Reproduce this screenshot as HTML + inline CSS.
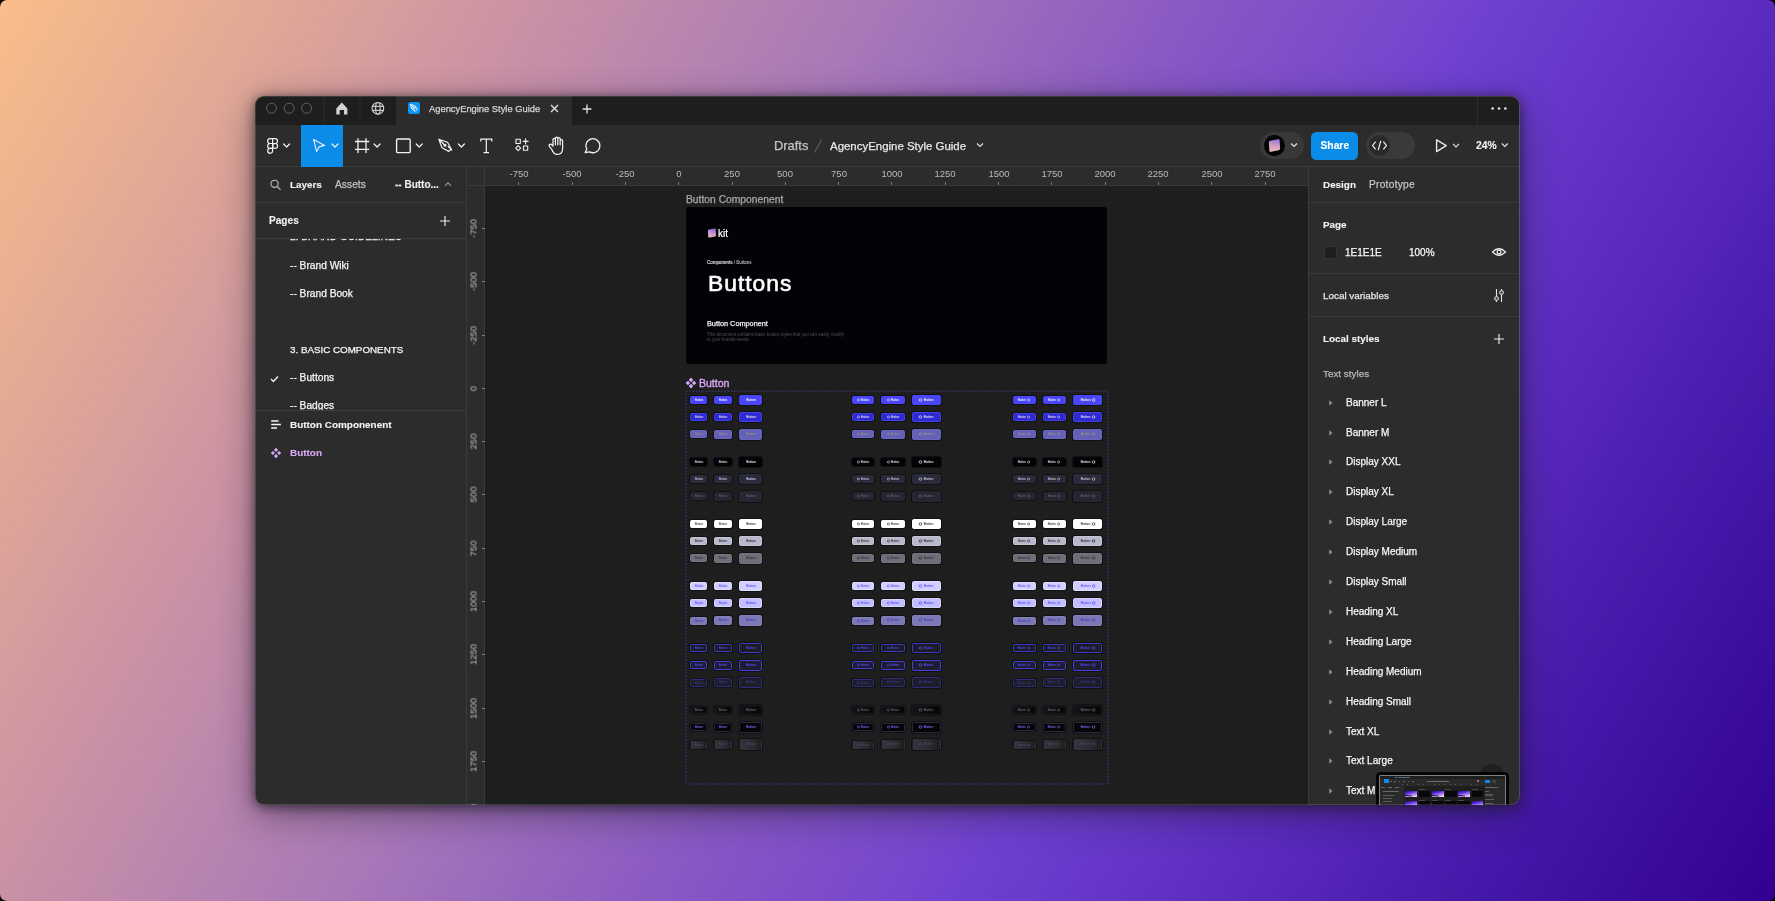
<!DOCTYPE html>
<html><head><meta charset="utf-8">
<style>
*{box-sizing:border-box;margin:0;padding:0}
html,body{width:1775px;height:901px;overflow:hidden;background:#000}
body{font-family:"Liberation Sans",sans-serif;position:relative}
.bg{position:absolute;left:0;top:0;width:1775px;height:901px;border-radius:7px;
background:linear-gradient(121deg,#F9BE8A 0%,#E0A896 12%,#C890A6 24%,#A878B8 38%,#8858C4 52%,#7646CE 62%,#6E40D0 65%,#5A2ABD 77%,#4216A6 88%,#320090 100%)}
.shadow{position:absolute;left:255px;top:96px;width:1265px;height:709px;border-radius:9px;box-shadow:0 2px 12px rgba(28,26,34,.7),0 10px 36px rgba(28,26,34,.45)}
.win{position:absolute;left:0;top:0;width:1775px;height:901px;clip-path:inset(96px 255.5px 96px 255px round 9px)}
.a{position:absolute}
.t{position:absolute;will-change:transform;white-space:nowrap;font-size:10px;line-height:12px;color:#E8E8E8}
.b{font-weight:bold}
.t{-webkit-text-stroke:0.25px currentColor}
.t.b{-webkit-text-stroke:0.1px currentColor}
</style></head><body>
<div class="bg"></div>
<div class="shadow"></div>
<div class="win">
  <!-- tab bar -->
  <div class="a" style="left:255px;top:96px;width:1265px;height:29px;background:#1E1E1E"></div>
  <!-- toolbar -->
  <div class="a" style="left:255px;top:125px;width:1265px;height:41px;background:#2C2C2C"></div>
  <div class="a" style="left:255px;top:166px;width:1265px;height:1px;background:#3A3A3A"></div>

  <!-- TABBAR CONTENT -->
  <svg class="a" style="left:255px;top:96px" width="400" height="29" viewBox="255 96 400 29">
    <g fill="none" stroke="#626262" stroke-width="1">
      <circle cx="271.5" cy="108.2" r="5"/><circle cx="289.2" cy="108.2" r="5"/><circle cx="306.6" cy="108.2" r="5"/>
    </g>
    <rect x="323.5" y="96" width="1" height="29" fill="#2A2A2A"/>
    <rect x="359.5" y="96" width="1" height="29" fill="#2A2A2A"/>
    <path d="M336.3 108.6 L341.85 102.4 L347.4 108.6 V114.6 H344 V110 H339.7 V114.6 H336.3 Z" fill="#D2D2D2"/>
    <g fill="none" stroke="#C8C8C8" stroke-width="1.2">
      <circle cx="377.9" cy="108.3" r="5.8"/>
      <ellipse cx="377.9" cy="108.3" rx="2.3" ry="5.8"/>
      <line x1="372.1" y1="106.3" x2="383.7" y2="106.3"/><line x1="372.1" y1="110.3" x2="383.7" y2="110.3"/>
    </g>
  </svg>
  <div class="a" style="left:396px;top:96px;width:176px;height:29px;background:#2C2C2C"></div>
  <div class="a" style="left:408px;top:102.2px;width:12px;height:12px;border-radius:2.5px;background:#0A94F4"></div>
  <svg class="a" style="left:408px;top:102.2px" width="12" height="12" viewBox="0 0 12 12"><g fill="none" stroke="#fff" stroke-width="1" stroke-linejoin="round"><path d="M2.4 2.4 L6.6 3.6 L9.4 7.2 L7.2 9.4 L3.6 6.6 Z"/><circle cx="6" cy="6" r="1.1"/><path d="M2.4 2.4 L5.2 5.2"/></g></svg>
  <div class="t" style="left:429px;top:102.5px;font-size:9.35px;color:#D6D6D6">AgencyEngine Style Guide</div>
  <svg class="a" style="left:550px;top:104px" width="9" height="9" viewBox="0 0 9 9"><path d="M1 1 L8 8 M8 1 L1 8" stroke="#E6E6E6" stroke-width="1.3"/></svg>
  <svg class="a" style="left:582px;top:104px" width="10" height="10" viewBox="0 0 10 10"><path d="M5 0.6 V9.4 M0.6 5 H9.4" stroke="#E6E6E6" stroke-width="1.3"/></svg>
  <div class="a" style="left:1477px;top:96px;width:1px;height:29px;background:#2E2E2E"></div>
  <svg class="a" style="left:1488px;top:104px" width="22" height="9" viewBox="0 0 22 9"><g fill="#E6E6E6"><circle cx="4.6" cy="4.5" r="1.3"/><circle cx="11" cy="4.5" r="1.3"/><circle cx="17.4" cy="4.5" r="1.3"/></g></svg>

  <!-- TOOLBAR CONTENT -->
  <div class="a" style="left:300.6px;top:125px;width:42.6px;height:42px;background:#0C8CE9"></div>
  <svg class="a" style="left:255px;top:125px" width="360" height="41" viewBox="255 125 360 41">
    <g fill="none" stroke="#F2F2F2" stroke-width="1.2" stroke-linejoin="round" stroke-linecap="round">
      <!-- figma logo -->
      <path d="M272.6 138.6 h-2.5 a2.45 2.45 0 0 0 0 4.9 h2.5 z M272.6 138.6 h2.5 a2.45 2.45 0 0 1 0 4.9 h-2.5 z M272.6 143.5 h-2.5 a2.45 2.45 0 0 0 0 4.9 h2.5 z"/>
      <circle cx="275.1" cy="145.95" r="2.45"/>
      <path d="M272.6 148.4 h-2.5 a2.45 2.45 0 1 0 2.5 2.45 z"/>
      <!-- chevrons -->
      <path d="M283.6 144 l3 3 l3 -3"/>
      <path d="M332 144 l3 3 l3 -3"/>
      <path d="M374.1 144 l3 3 l3 -3"/>
      <path d="M416.2 144 l3 3 l3 -3"/>
      <path d="M458.4 144 l3 3 l3 -3"/>
      <!-- cursor -->
      <path d="M313.6 139.4 L324.6 145.4 L319.3 146.6 L316.6 151.6 Z" stroke="#F4EEFF" stroke-width="1.1"/>
      <!-- frame -->
      <path d="M358 138.3 V153.1 M366 138.3 V153.1 M355 141.5 H369.3 M355 149.3 H369.3" stroke-linecap="butt" stroke-width="1.3"/>
      <!-- rect -->
      <rect x="396.6" y="139" width="13.6" height="13.6" rx="1.2" stroke-width="1.4"/>
      <!-- pen -->
      <path d="M438.8 139.2 L447.5 142.3 L451.2 149 L448.8 151.4 L442 147.8 Z M438.8 139.2 L444.6 145" stroke-width="1.2"/>
      <circle cx="445" cy="145.3" r="0.9" fill="#F2F2F2"/>
      <path d="M448.2 146.5 L451.8 150.1" />
      <!-- T -->
      <path d="M480.8 141.6 V139.2 H491.8 V141.6 M486.3 139.2 V152.7 M483.6 152.7 H489" stroke-width="1.2" stroke-linecap="butt" stroke-linejoin="miter"/>
      <!-- components -->
      <rect x="516" y="139.2" width="4.3" height="4.3" stroke-width="1.1"/>
      <path d="M525.6 138.8 V143.9 M523 141.35 H528.2" stroke-width="1.1"/>
      <path d="M518.15 145.6 L520.6 148.1 L518.15 150.6 L515.7 148.1 Z" stroke-width="1.1"/>
      <rect x="523.4" y="146" width="4.3" height="4.3" stroke-width="1.1"/>
      <!-- hand -->
      <path d="M551.8 149.4 L549.6 146.6 Q548.5 145.1 549.8 144.4 Q551 143.8 552 145 L553 146.2 V139.6 Q553 138.3 554.2 138.3 Q555.4 138.3 555.4 139.6 V144.8 V138.4 Q555.4 137.1 556.6 137.1 Q557.8 137.1 557.8 138.4 V144.8 V139 Q557.8 137.7 559 137.7 Q560.2 137.7 560.2 139 V144.8 V140.8 Q560.2 139.5 561.4 139.5 Q562.6 139.5 562.6 140.8 V148.8 Q562.6 154.4 557.2 154.4 Q553.8 154.4 551.8 149.4 Z" stroke-width="1.25"/>
      <!-- comment -->
      <path d="M585.2 152.6 L586.8 149.2 A7 7 0 1 1 589.6 151.9 Z" stroke-width="1.3"/>
    </g>
  </svg>
  <div class="t" style="left:773.5px;top:139px;font-size:12.9px;line-height:14px;color:#C4C4C4">Drafts</div>
  <svg class="a" style="left:813px;top:138px" width="10" height="16" viewBox="0 0 10 16"><path d="M8.6 1.5 L1.6 14.5" stroke="#6A6A6A" stroke-width="1"/></svg>
  <div class="t" style="left:830px;top:139px;font-size:11.45px;line-height:14px;color:#E8E8E8">AgencyEngine Style Guide</div>
  <svg class="a" style="left:975px;top:142px" width="10" height="7" viewBox="0 0 10 7"><path d="M2 1.5 l3 3 l3 -3" fill="none" stroke="#E0E0E0" stroke-width="1.2"/></svg>

  <div class="a" style="left:1260px;top:132px;width:44px;height:27px;border-radius:14px;background:#383838"></div>
  <div class="a" style="left:1263.8px;top:135px;width:21px;height:21px;border-radius:50%;background:#040406;overflow:hidden">
    <div class="a" style="left:5px;top:5px;width:11px;height:11px;transform:rotate(-12deg) skewX(-8deg);border-radius:1.5px;background:linear-gradient(200deg,#8B6FE0 0%,#C79ABF 45%,#F2C0B0 100%)"></div>
  </div>
  <svg class="a" style="left:1289px;top:142px" width="10" height="7" viewBox="0 0 10 7"><path d="M2 1.5 l3 3 l3 -3" fill="none" stroke="#E0E0E0" stroke-width="1.2"/></svg>
  <div class="a" style="left:1310.8px;top:131.5px;width:47.6px;height:28px;border-radius:5.5px;background:#0C8CE9"></div>
  <div class="t b" style="left:1310.8px;width:47.6px;text-align:center;top:139.5px;font-size:10.3px;color:#fff">Share</div>
  <div class="a" style="left:1365.6px;top:132px;width:49px;height:27px;border-radius:14px;background:#3A3A3A"></div>
  <div class="a" style="left:1368.9px;top:135px;width:21px;height:21px;border-radius:50%;background:#2A2A2A"></div>
  <svg class="a" style="left:1371px;top:139px" width="17" height="13" viewBox="0 0 17 13"><g fill="none" stroke="#F0F0F0" stroke-width="1.2"><path d="M4.6 2.6 L1.6 6.5 L4.6 10.4 M12.4 2.6 L15.4 6.5 L12.4 10.4 M9.8 1.8 L7.2 11.2"/></g></svg>
  <svg class="a" style="left:1430px;top:136px" width="35" height="20" viewBox="1430 136 35 20"><path d="M1436.6 139.8 V151.6 L1446.2 145.7 Z" fill="none" stroke="#E8E8E8" stroke-width="1.4" stroke-linejoin="round"/><path d="M1453 143.8 l3 3 l3 -3" fill="none" stroke="#E0E0E0" stroke-width="1.2"/></svg>
  <div class="t b" style="left:1476.4px;top:139.5px;font-size:10.3px;color:#F2F2F2">24%</div>
  <svg class="a" style="left:1500px;top:142px" width="10" height="7" viewBox="0 0 10 7"><path d="M1.8 1.5 l3 3 l3 -3" fill="none" stroke="#E0E0E0" stroke-width="1.2"/></svg>
  <!-- left panel -->
  <div class="a" style="left:255px;top:167px;width:211px;height:640px;background:#2C2C2C"></div>
  <div class="a" style="left:466px;top:167px;width:1px;height:640px;background:#3A3A3A"></div>

  <!-- LEFT PANEL CONTENT -->
  <div class="a" style="left:255px;top:202px;width:211px;height:1px;background:#3A3A3A"></div>
  <svg class="a" style="left:269px;top:178px" width="14" height="14" viewBox="0 0 14 14"><g fill="none" stroke="#BDBDBD" stroke-width="1.1"><circle cx="5.6" cy="5.8" r="3.6"/><path d="M8.3 8.5 L11.6 11.8"/></g></svg>
  <div class="t b" style="left:289.9px;top:179px;font-size:9.9px;color:#F2F2F2">Layers</div>
  <div class="t" style="left:334.8px;top:179px;font-size:10.2px;color:#C2C2C2;letter-spacing:0.05px">Assets</div>
  <div class="t b" style="left:394.6px;top:179px;font-size:10px;color:#F2F2F2">-- Butto...</div>
  <svg class="a" style="left:443px;top:181px" width="10" height="7" viewBox="0 0 10 7"><path d="M2 4.8 l3 -3 l3 3" fill="none" stroke="#9A9A9A" stroke-width="1.1"/></svg>
  <div class="t b" style="left:269px;top:215px;font-size:10.1px;color:#F2F2F2">Pages</div>
  <svg class="a" style="left:438.5px;top:214.5px" width="12" height="12" viewBox="0 0 12 12"><path d="M6 1 V11 M1 6 H11" stroke="#EAEAEA" stroke-width="1.2"/></svg>
  <div class="a" style="left:255px;top:238px;width:211px;height:1px;background:#3E3E3E"></div>
  <div class="a" style="left:255px;top:239px;width:211px;height:171px;overflow:hidden">
    <div class="t" style="left:35px;top:-8px;color:#F6F6F6;font-size:10.2px">2. BRAND GUIDELINES</div>
    <div class="t" style="left:35px;top:20.5px;color:#F6F6F6;font-size:10.2px">-- Brand Wiki</div>
    <div class="t" style="left:35px;top:48.5px;color:#F6F6F6;font-size:10.2px">-- Brand Book</div>
    <div class="t" style="left:35px;top:104.5px;color:#F6F6F6;font-size:9.8px">3. BASIC COMPONENTS</div>
    <svg class="a" style="left:15px;top:135.5px" width="9" height="8" viewBox="0 0 9 8"><path d="M1 4 L3.4 6.4 L8 1.6" fill="none" stroke="#F2F2F2" stroke-width="1.4"/></svg>
    <div class="t" style="left:35px;top:132.5px;color:#F6F6F6;font-size:10.2px">-- Buttons</div>
    <div class="t" style="left:35px;top:160.5px;color:#F6F6F6;font-size:10.2px">-- Badges</div>
  </div>
  <div class="a" style="left:255px;top:410px;width:211px;height:1px;background:#3E3E3E"></div>
  <svg class="a" style="left:270px;top:418px" width="12" height="12" viewBox="0 0 12 12"><path d="M1.2 2.9 H8.5 M1.2 6.6 H10.9 M1.2 10.1 H7" stroke="#F6F6F6" stroke-width="1.5"/></svg>
  <div class="t b" style="left:290.3px;top:418.5px;color:#F4F4F4;font-size:9.95px">Button Componenent</div>
  <svg class="a" style="left:270px;top:446.5px" width="12" height="12" viewBox="0 0 12 12"><g fill="#D8A8F8"><path d="M6 0.8 L8.1 2.9 L6 5 L3.9 2.9Z M6 7 L8.1 9.1 L6 11.2 L3.9 9.1Z M2.9 3.9 L5 6 L2.9 8.1 L0.8 6Z M9.1 3.9 L11.2 6 L9.1 8.1 L7 6Z"/></g></svg>
  <div class="t b" style="left:290.3px;top:446.5px;color:#D9A9F7;font-size:9.95px">Button</div>
  <!-- rulers -->
  <div class="a" style="left:467px;top:167px;width:841px;height:18px;background:#2C2C2C"></div>
  <div class="a" style="left:467px;top:167px;width:18px;height:640px;background:#2C2C2C"></div>
  <div class="a" style="left:467px;top:185px;width:841px;height:1px;background:#3A3A3A"></div>
  <div class="a" style="left:484px;top:167px;width:1px;height:640px;background:#3A3A3A"></div>
  <div class="t" style="left:498.8px;width:40px;text-align:center;top:167.8px;font-size:9.5px;line-height:11px;color:#BABABA;-webkit-text-stroke:0">-750</div>
  <div class="a" style="left:518.3px;top:181.5px;width:1px;height:3px;background:#7A7A7A"></div>
  <div class="t" style="left:552.1px;width:40px;text-align:center;top:167.8px;font-size:9.5px;line-height:11px;color:#BABABA;-webkit-text-stroke:0">-500</div>
  <div class="a" style="left:571.6px;top:181.5px;width:1px;height:3px;background:#7A7A7A"></div>
  <div class="t" style="left:605.4px;width:40px;text-align:center;top:167.8px;font-size:9.5px;line-height:11px;color:#BABABA;-webkit-text-stroke:0">-250</div>
  <div class="a" style="left:624.9px;top:181.5px;width:1px;height:3px;background:#7A7A7A"></div>
  <div class="t" style="left:658.7px;width:40px;text-align:center;top:167.8px;font-size:9.5px;line-height:11px;color:#BABABA;-webkit-text-stroke:0">0</div>
  <div class="a" style="left:678.2px;top:181.5px;width:1px;height:3px;background:#7A7A7A"></div>
  <div class="t" style="left:712.0px;width:40px;text-align:center;top:167.8px;font-size:9.5px;line-height:11px;color:#BABABA;-webkit-text-stroke:0">250</div>
  <div class="a" style="left:731.5px;top:181.5px;width:1px;height:3px;background:#7A7A7A"></div>
  <div class="t" style="left:765.3px;width:40px;text-align:center;top:167.8px;font-size:9.5px;line-height:11px;color:#BABABA;-webkit-text-stroke:0">500</div>
  <div class="a" style="left:784.8px;top:181.5px;width:1px;height:3px;background:#7A7A7A"></div>
  <div class="t" style="left:818.6px;width:40px;text-align:center;top:167.8px;font-size:9.5px;line-height:11px;color:#BABABA;-webkit-text-stroke:0">750</div>
  <div class="a" style="left:838.1px;top:181.5px;width:1px;height:3px;background:#7A7A7A"></div>
  <div class="t" style="left:871.9px;width:40px;text-align:center;top:167.8px;font-size:9.5px;line-height:11px;color:#BABABA;-webkit-text-stroke:0">1000</div>
  <div class="a" style="left:891.4px;top:181.5px;width:1px;height:3px;background:#7A7A7A"></div>
  <div class="t" style="left:925.2px;width:40px;text-align:center;top:167.8px;font-size:9.5px;line-height:11px;color:#BABABA;-webkit-text-stroke:0">1250</div>
  <div class="a" style="left:944.7px;top:181.5px;width:1px;height:3px;background:#7A7A7A"></div>
  <div class="t" style="left:978.5px;width:40px;text-align:center;top:167.8px;font-size:9.5px;line-height:11px;color:#BABABA;-webkit-text-stroke:0">1500</div>
  <div class="a" style="left:998.0px;top:181.5px;width:1px;height:3px;background:#7A7A7A"></div>
  <div class="t" style="left:1031.8px;width:40px;text-align:center;top:167.8px;font-size:9.5px;line-height:11px;color:#BABABA;-webkit-text-stroke:0">1750</div>
  <div class="a" style="left:1051.3px;top:181.5px;width:1px;height:3px;background:#7A7A7A"></div>
  <div class="t" style="left:1085.1px;width:40px;text-align:center;top:167.8px;font-size:9.5px;line-height:11px;color:#BABABA;-webkit-text-stroke:0">2000</div>
  <div class="a" style="left:1104.6px;top:181.5px;width:1px;height:3px;background:#7A7A7A"></div>
  <div class="t" style="left:1138.4px;width:40px;text-align:center;top:167.8px;font-size:9.5px;line-height:11px;color:#BABABA;-webkit-text-stroke:0">2250</div>
  <div class="a" style="left:1157.9px;top:181.5px;width:1px;height:3px;background:#7A7A7A"></div>
  <div class="t" style="left:1191.7px;width:40px;text-align:center;top:167.8px;font-size:9.5px;line-height:11px;color:#BABABA;-webkit-text-stroke:0">2500</div>
  <div class="a" style="left:1211.2px;top:181.5px;width:1px;height:3px;background:#7A7A7A"></div>
  <div class="t" style="left:1245.0px;width:40px;text-align:center;top:167.8px;font-size:9.5px;line-height:11px;color:#BABABA;-webkit-text-stroke:0">2750</div>
  <div class="a" style="left:1264.5px;top:181.5px;width:1px;height:3px;background:#7A7A7A"></div>
  <div class="t" style="left:452.6px;width:40px;text-align:center;top:222.9px;font-size:9.5px;line-height:11px;color:#BABABA;-webkit-text-stroke:0;transform:rotate(-90deg)">-750</div>
  <div class="a" style="left:481.5px;top:227.9px;width:3px;height:1px;background:#7A7A7A"></div>
  <div class="t" style="left:452.6px;width:40px;text-align:center;top:276.2px;font-size:9.5px;line-height:11px;color:#BABABA;-webkit-text-stroke:0;transform:rotate(-90deg)">-500</div>
  <div class="a" style="left:481.5px;top:281.2px;width:3px;height:1px;background:#7A7A7A"></div>
  <div class="t" style="left:452.6px;width:40px;text-align:center;top:329.5px;font-size:9.5px;line-height:11px;color:#BABABA;-webkit-text-stroke:0;transform:rotate(-90deg)">-250</div>
  <div class="a" style="left:481.5px;top:334.5px;width:3px;height:1px;background:#7A7A7A"></div>
  <div class="t" style="left:452.6px;width:40px;text-align:center;top:382.8px;font-size:9.5px;line-height:11px;color:#BABABA;-webkit-text-stroke:0;transform:rotate(-90deg)">0</div>
  <div class="a" style="left:481.5px;top:387.8px;width:3px;height:1px;background:#7A7A7A"></div>
  <div class="t" style="left:452.6px;width:40px;text-align:center;top:436.1px;font-size:9.5px;line-height:11px;color:#BABABA;-webkit-text-stroke:0;transform:rotate(-90deg)">250</div>
  <div class="a" style="left:481.5px;top:441.1px;width:3px;height:1px;background:#7A7A7A"></div>
  <div class="t" style="left:452.6px;width:40px;text-align:center;top:489.4px;font-size:9.5px;line-height:11px;color:#BABABA;-webkit-text-stroke:0;transform:rotate(-90deg)">500</div>
  <div class="a" style="left:481.5px;top:494.4px;width:3px;height:1px;background:#7A7A7A"></div>
  <div class="t" style="left:452.6px;width:40px;text-align:center;top:542.7px;font-size:9.5px;line-height:11px;color:#BABABA;-webkit-text-stroke:0;transform:rotate(-90deg)">750</div>
  <div class="a" style="left:481.5px;top:547.7px;width:3px;height:1px;background:#7A7A7A"></div>
  <div class="t" style="left:452.6px;width:40px;text-align:center;top:596.0px;font-size:9.5px;line-height:11px;color:#BABABA;-webkit-text-stroke:0;transform:rotate(-90deg)">1000</div>
  <div class="a" style="left:481.5px;top:601.0px;width:3px;height:1px;background:#7A7A7A"></div>
  <div class="t" style="left:452.6px;width:40px;text-align:center;top:649.3px;font-size:9.5px;line-height:11px;color:#BABABA;-webkit-text-stroke:0;transform:rotate(-90deg)">1250</div>
  <div class="a" style="left:481.5px;top:654.3px;width:3px;height:1px;background:#7A7A7A"></div>
  <div class="t" style="left:452.6px;width:40px;text-align:center;top:702.6px;font-size:9.5px;line-height:11px;color:#BABABA;-webkit-text-stroke:0;transform:rotate(-90deg)">1500</div>
  <div class="a" style="left:481.5px;top:707.6px;width:3px;height:1px;background:#7A7A7A"></div>
  <div class="t" style="left:452.6px;width:40px;text-align:center;top:755.9px;font-size:9.5px;line-height:11px;color:#BABABA;-webkit-text-stroke:0;transform:rotate(-90deg)">1750</div>
  <div class="a" style="left:481.5px;top:760.9px;width:3px;height:1px;background:#7A7A7A"></div>
  <div class="t" style="left:452.6px;width:40px;text-align:center;top:809.2px;font-size:9.5px;line-height:11px;color:#BABABA;-webkit-text-stroke:0;transform:rotate(-90deg)">2000</div>
  <div class="a" style="left:481.5px;top:814.2px;width:3px;height:1px;background:#7A7A7A"></div>
  <!-- canvas -->
  <div class="a" style="left:485px;top:186px;width:823px;height:620px;background:#1E1E1E"></div>
  <!-- CANVAS CONTENT -->
  <div class="t" style="left:685.8px;top:193.5px;font-size:10.3px;color:#A8A8A8">Button Componenent</div>
  <div class="a" style="left:686.2px;top:206.8px;width:421px;height:157px;border-radius:3px;background:#030307"></div>
  <div class="a" style="left:707.8px;top:229.2px;width:8px;height:8px;transform:rotate(-10deg) skewX(-6deg);border-radius:1px;background:linear-gradient(210deg,#7A5CE8 0%,#C690C8 50%,#F4C8B8 100%)"></div>
  <div class="t" style="left:717.8px;top:227.5px;font-size:10px;color:#FFFFFF;-webkit-text-stroke:0.2px #fff">kit</div>
  <div class="t" style="left:707px;top:259.8px;font-size:4.5px;line-height:5px;color:#E6E6E6;-webkit-text-stroke:0.1px #e6e6e6">Components <span style="color:#8A8A8A">/ Buttons</span></div>
  <div class="t" style="left:707.8px;top:270.2px;font-size:22.8px;line-height:26px;letter-spacing:1.0px;color:#FFFFFF;-webkit-text-stroke:0.6px #fff">Buttons</div>
  <div class="t" style="left:707px;top:320.4px;font-size:7.3px;line-height:8px;color:#F0F0F0;-webkit-text-stroke:0.25px #f0f0f0">Button Component</div>
  <div class="t" style="left:707px;top:332.8px;font-size:4.45px;line-height:4.6px;color:#4E4E5A;-webkit-text-stroke:0">This document contains basic button styles that you can easily modify<br>to your brands needs</div>
  <svg class="a" style="left:685px;top:377px" width="12" height="12" viewBox="0 0 12 12"><g fill="#D7A6F5"><path d="M6 0.6 L8.3 2.9 L6 5.2 L3.7 2.9Z M6 6.8 L8.3 9.1 L6 11.4 L3.7 9.1Z M2.9 3.7 L5.2 6 L2.9 8.3 L0.6 6Z M9.1 3.7 L11.4 6 L9.1 8.3 L6.8 6Z"/></g></svg>
  <div class="t" style="left:698.6px;top:376.5px;font-size:10.5px;color:#D9A8F7;-webkit-text-stroke:0.35px #D9A8F7">Button</div>
  <svg class="a" style="left:685px;top:389.5px" width="424" height="396" viewBox="0 0 424 396"><rect x="1.1" y="1.2" width="421.8" height="392.8" fill="none" stroke="#4E3A94" stroke-width="1" stroke-dasharray="1.4 1.8"/></svg>
  <div class="a" style="left:690.0px;top:395.8px;width:17.0px;height:8.0px;border-radius:1.5px;background:#4B45FA;border:0.7px solid #4B45FA;box-shadow:0 0 0 0.8px rgba(0,0,0,.55)"><div style="position:absolute;left:50%;top:50%;transform:translate(-50%,-50%) scale(0.27);display:flex;align-items:center;font-size:10px;line-height:12px;color:#FFFFFF;white-space:nowrap;-webkit-text-stroke:0.15px currentColor">Button</div></div>
  <div class="a" style="left:713.7px;top:395.5px;width:18.6px;height:8.6px;border-radius:1.5px;background:#4B45FA;border:0.7px solid #4B45FA;box-shadow:0 0 0 0.8px rgba(0,0,0,.55)"><div style="position:absolute;left:50%;top:50%;transform:translate(-50%,-50%) scale(0.27);display:flex;align-items:center;font-size:10px;line-height:12px;color:#FFFFFF;white-space:nowrap;-webkit-text-stroke:0.15px currentColor">Button</div></div>
  <div class="a" style="left:739.0px;top:394.5px;width:23.1px;height:10.6px;border-radius:1.8px;background:#4B45FA;border:0.7px solid #4B45FA;box-shadow:0 0 0 0.8px rgba(0,0,0,.55)"><div style="position:absolute;left:50%;top:50%;transform:translate(-50%,-50%) scale(0.33);display:flex;align-items:center;font-size:10px;line-height:12px;color:#FFFFFF;white-space:nowrap;-webkit-text-stroke:0.15px currentColor">Button</div></div>
  <div class="a" style="left:851.5px;top:395.8px;width:22.5px;height:8.0px;border-radius:1.5px;background:#4B45FA;border:0.7px solid #4B45FA;box-shadow:0 0 0 0.8px rgba(0,0,0,.55)"><div style="position:absolute;left:50%;top:50%;transform:translate(-50%,-50%) scale(0.27);display:flex;align-items:center;font-size:10px;line-height:12px;color:#FFFFFF;white-space:nowrap;-webkit-text-stroke:0.15px currentColor"><i style="display:inline-block;width:10px;height:10px;border:2px solid #FFFFFF;border-radius:50%;margin:0 5px 0 0"></i>Button</div></div>
  <div class="a" style="left:881.2px;top:395.5px;width:24.1px;height:8.6px;border-radius:1.5px;background:#4B45FA;border:0.7px solid #4B45FA;box-shadow:0 0 0 0.8px rgba(0,0,0,.55)"><div style="position:absolute;left:50%;top:50%;transform:translate(-50%,-50%) scale(0.27);display:flex;align-items:center;font-size:10px;line-height:12px;color:#FFFFFF;white-space:nowrap;-webkit-text-stroke:0.15px currentColor"><i style="display:inline-block;width:10px;height:10px;border:2px solid #FFFFFF;border-radius:50%;margin:0 5px 0 0"></i>Button</div></div>
  <div class="a" style="left:911.7px;top:394.5px;width:29.3px;height:10.6px;border-radius:1.8px;background:#4B45FA;border:0.7px solid #4B45FA;box-shadow:0 0 0 0.8px rgba(0,0,0,.55)"><div style="position:absolute;left:50%;top:50%;transform:translate(-50%,-50%) scale(0.33);display:flex;align-items:center;font-size:10px;line-height:12px;color:#FFFFFF;white-space:nowrap;-webkit-text-stroke:0.15px currentColor"><i style="display:inline-block;width:10px;height:10px;border:2px solid #FFFFFF;border-radius:50%;margin:0 5px 0 0"></i>Button</div></div>
  <div class="a" style="left:1013.1px;top:395.8px;width:22.5px;height:8.0px;border-radius:1.5px;background:#4B45FA;border:0.7px solid #4B45FA;box-shadow:0 0 0 0.8px rgba(0,0,0,.55)"><div style="position:absolute;left:50%;top:50%;transform:translate(-50%,-50%) scale(0.27);display:flex;align-items:center;font-size:10px;line-height:12px;color:#FFFFFF;white-space:nowrap;-webkit-text-stroke:0.15px currentColor">Button<i style="display:inline-block;width:10px;height:10px;border:2px solid #FFFFFF;border-radius:50%;margin:0 0 0 5px"></i></div></div>
  <div class="a" style="left:1042.7px;top:395.5px;width:23.5px;height:8.6px;border-radius:1.5px;background:#4B45FA;border:0.7px solid #4B45FA;box-shadow:0 0 0 0.8px rgba(0,0,0,.55)"><div style="position:absolute;left:50%;top:50%;transform:translate(-50%,-50%) scale(0.27);display:flex;align-items:center;font-size:10px;line-height:12px;color:#FFFFFF;white-space:nowrap;-webkit-text-stroke:0.15px currentColor">Button<i style="display:inline-block;width:10px;height:10px;border:2px solid #FFFFFF;border-radius:50%;margin:0 0 0 5px"></i></div></div>
  <div class="a" style="left:1073.3px;top:394.5px;width:29.0px;height:10.6px;border-radius:1.8px;background:#4B45FA;border:0.7px solid #4B45FA;box-shadow:0 0 0 0.8px rgba(0,0,0,.55)"><div style="position:absolute;left:50%;top:50%;transform:translate(-50%,-50%) scale(0.33);display:flex;align-items:center;font-size:10px;line-height:12px;color:#FFFFFF;white-space:nowrap;-webkit-text-stroke:0.15px currentColor">Button<i style="display:inline-block;width:10px;height:10px;border:2px solid #FFFFFF;border-radius:50%;margin:0 0 0 5px"></i></div></div>
  <div class="a" style="left:690.0px;top:413.1px;width:17.0px;height:8.0px;border-radius:1.5px;background:#2E2ACF;border:0.7px solid #4541E8;box-shadow:0 0 0 0.8px rgba(0,0,0,.55)"><div style="position:absolute;left:50%;top:50%;transform:translate(-50%,-50%) scale(0.27);display:flex;align-items:center;font-size:10px;line-height:12px;color:#E8E6FF;white-space:nowrap;-webkit-text-stroke:0.15px currentColor">Button</div></div>
  <div class="a" style="left:713.7px;top:412.8px;width:18.6px;height:8.6px;border-radius:1.5px;background:#2E2ACF;border:0.7px solid #4541E8;box-shadow:0 0 0 0.8px rgba(0,0,0,.55)"><div style="position:absolute;left:50%;top:50%;transform:translate(-50%,-50%) scale(0.27);display:flex;align-items:center;font-size:10px;line-height:12px;color:#E8E6FF;white-space:nowrap;-webkit-text-stroke:0.15px currentColor">Button</div></div>
  <div class="a" style="left:739.0px;top:411.8px;width:23.1px;height:10.6px;border-radius:1.8px;background:#2E2ACF;border:0.7px solid #4541E8;box-shadow:0 0 0 0.8px rgba(0,0,0,.55)"><div style="position:absolute;left:50%;top:50%;transform:translate(-50%,-50%) scale(0.33);display:flex;align-items:center;font-size:10px;line-height:12px;color:#E8E6FF;white-space:nowrap;-webkit-text-stroke:0.15px currentColor">Button</div></div>
  <div class="a" style="left:851.5px;top:413.1px;width:22.5px;height:8.0px;border-radius:1.5px;background:#2E2ACF;border:0.7px solid #4541E8;box-shadow:0 0 0 0.8px rgba(0,0,0,.55)"><div style="position:absolute;left:50%;top:50%;transform:translate(-50%,-50%) scale(0.27);display:flex;align-items:center;font-size:10px;line-height:12px;color:#E8E6FF;white-space:nowrap;-webkit-text-stroke:0.15px currentColor"><i style="display:inline-block;width:10px;height:10px;border:2px solid #E8E6FF;border-radius:50%;margin:0 5px 0 0"></i>Button</div></div>
  <div class="a" style="left:881.2px;top:412.8px;width:24.1px;height:8.6px;border-radius:1.5px;background:#2E2ACF;border:0.7px solid #4541E8;box-shadow:0 0 0 0.8px rgba(0,0,0,.55)"><div style="position:absolute;left:50%;top:50%;transform:translate(-50%,-50%) scale(0.27);display:flex;align-items:center;font-size:10px;line-height:12px;color:#E8E6FF;white-space:nowrap;-webkit-text-stroke:0.15px currentColor"><i style="display:inline-block;width:10px;height:10px;border:2px solid #E8E6FF;border-radius:50%;margin:0 5px 0 0"></i>Button</div></div>
  <div class="a" style="left:911.7px;top:411.8px;width:29.3px;height:10.6px;border-radius:1.8px;background:#2E2ACF;border:0.7px solid #4541E8;box-shadow:0 0 0 0.8px rgba(0,0,0,.55)"><div style="position:absolute;left:50%;top:50%;transform:translate(-50%,-50%) scale(0.33);display:flex;align-items:center;font-size:10px;line-height:12px;color:#E8E6FF;white-space:nowrap;-webkit-text-stroke:0.15px currentColor"><i style="display:inline-block;width:10px;height:10px;border:2px solid #E8E6FF;border-radius:50%;margin:0 5px 0 0"></i>Button</div></div>
  <div class="a" style="left:1013.1px;top:413.1px;width:22.5px;height:8.0px;border-radius:1.5px;background:#2E2ACF;border:0.7px solid #4541E8;box-shadow:0 0 0 0.8px rgba(0,0,0,.55)"><div style="position:absolute;left:50%;top:50%;transform:translate(-50%,-50%) scale(0.27);display:flex;align-items:center;font-size:10px;line-height:12px;color:#E8E6FF;white-space:nowrap;-webkit-text-stroke:0.15px currentColor">Button<i style="display:inline-block;width:10px;height:10px;border:2px solid #E8E6FF;border-radius:50%;margin:0 0 0 5px"></i></div></div>
  <div class="a" style="left:1042.7px;top:412.8px;width:23.5px;height:8.6px;border-radius:1.5px;background:#2E2ACF;border:0.7px solid #4541E8;box-shadow:0 0 0 0.8px rgba(0,0,0,.55)"><div style="position:absolute;left:50%;top:50%;transform:translate(-50%,-50%) scale(0.27);display:flex;align-items:center;font-size:10px;line-height:12px;color:#E8E6FF;white-space:nowrap;-webkit-text-stroke:0.15px currentColor">Button<i style="display:inline-block;width:10px;height:10px;border:2px solid #E8E6FF;border-radius:50%;margin:0 0 0 5px"></i></div></div>
  <div class="a" style="left:1073.3px;top:411.8px;width:29.0px;height:10.6px;border-radius:1.8px;background:#2E2ACF;border:0.7px solid #4541E8;box-shadow:0 0 0 0.8px rgba(0,0,0,.55)"><div style="position:absolute;left:50%;top:50%;transform:translate(-50%,-50%) scale(0.33);display:flex;align-items:center;font-size:10px;line-height:12px;color:#E8E6FF;white-space:nowrap;-webkit-text-stroke:0.15px currentColor">Button<i style="display:inline-block;width:10px;height:10px;border:2px solid #E8E6FF;border-radius:50%;margin:0 0 0 5px"></i></div></div>
  <div class="a" style="left:690.0px;top:430.3px;width:17.0px;height:8.0px;border-radius:1.5px;background:#6461B8;border:0.7px solid #6A66C0;box-shadow:0 0 0 0.8px rgba(0,0,0,.55)"><div style="position:absolute;left:50%;top:50%;transform:translate(-50%,-50%) scale(0.27);display:flex;align-items:center;font-size:10px;line-height:12px;color:#A09878;white-space:nowrap;-webkit-text-stroke:0.15px currentColor">Button</div></div>
  <div class="a" style="left:713.7px;top:430.0px;width:18.6px;height:8.6px;border-radius:1.5px;background:#6461B8;border:0.7px solid #6A66C0;box-shadow:0 0 0 0.8px rgba(0,0,0,.55)"><div style="position:absolute;left:50%;top:50%;transform:translate(-50%,-50%) scale(0.27);display:flex;align-items:center;font-size:10px;line-height:12px;color:#A09878;white-space:nowrap;-webkit-text-stroke:0.15px currentColor">Button</div></div>
  <div class="a" style="left:739.0px;top:429.0px;width:23.1px;height:10.6px;border-radius:1.8px;background:#6461B8;border:0.7px solid #6A66C0;box-shadow:0 0 0 0.8px rgba(0,0,0,.55)"><div style="position:absolute;left:50%;top:50%;transform:translate(-50%,-50%) scale(0.33);display:flex;align-items:center;font-size:10px;line-height:12px;color:#A09878;white-space:nowrap;-webkit-text-stroke:0.15px currentColor">Button</div></div>
  <div class="a" style="left:851.5px;top:430.3px;width:22.5px;height:8.0px;border-radius:1.5px;background:#6461B8;border:0.7px solid #6A66C0;box-shadow:0 0 0 0.8px rgba(0,0,0,.55)"><div style="position:absolute;left:50%;top:50%;transform:translate(-50%,-50%) scale(0.27);display:flex;align-items:center;font-size:10px;line-height:12px;color:#A09878;white-space:nowrap;-webkit-text-stroke:0.15px currentColor"><i style="display:inline-block;width:10px;height:10px;border:2px solid #A09878;border-radius:50%;margin:0 5px 0 0"></i>Button</div></div>
  <div class="a" style="left:881.2px;top:430.0px;width:24.1px;height:8.6px;border-radius:1.5px;background:#6461B8;border:0.7px solid #6A66C0;box-shadow:0 0 0 0.8px rgba(0,0,0,.55)"><div style="position:absolute;left:50%;top:50%;transform:translate(-50%,-50%) scale(0.27);display:flex;align-items:center;font-size:10px;line-height:12px;color:#A09878;white-space:nowrap;-webkit-text-stroke:0.15px currentColor"><i style="display:inline-block;width:10px;height:10px;border:2px solid #A09878;border-radius:50%;margin:0 5px 0 0"></i>Button</div></div>
  <div class="a" style="left:911.7px;top:429.0px;width:29.3px;height:10.6px;border-radius:1.8px;background:#6461B8;border:0.7px solid #6A66C0;box-shadow:0 0 0 0.8px rgba(0,0,0,.55)"><div style="position:absolute;left:50%;top:50%;transform:translate(-50%,-50%) scale(0.33);display:flex;align-items:center;font-size:10px;line-height:12px;color:#A09878;white-space:nowrap;-webkit-text-stroke:0.15px currentColor"><i style="display:inline-block;width:10px;height:10px;border:2px solid #A09878;border-radius:50%;margin:0 5px 0 0"></i>Button</div></div>
  <div class="a" style="left:1013.1px;top:430.3px;width:22.5px;height:8.0px;border-radius:1.5px;background:#6461B8;border:0.7px solid #6A66C0;box-shadow:0 0 0 0.8px rgba(0,0,0,.55)"><div style="position:absolute;left:50%;top:50%;transform:translate(-50%,-50%) scale(0.27);display:flex;align-items:center;font-size:10px;line-height:12px;color:#A09878;white-space:nowrap;-webkit-text-stroke:0.15px currentColor">Button<i style="display:inline-block;width:10px;height:10px;border:2px solid #A09878;border-radius:50%;margin:0 0 0 5px"></i></div></div>
  <div class="a" style="left:1042.7px;top:430.0px;width:23.5px;height:8.6px;border-radius:1.5px;background:#6461B8;border:0.7px solid #6A66C0;box-shadow:0 0 0 0.8px rgba(0,0,0,.55)"><div style="position:absolute;left:50%;top:50%;transform:translate(-50%,-50%) scale(0.27);display:flex;align-items:center;font-size:10px;line-height:12px;color:#A09878;white-space:nowrap;-webkit-text-stroke:0.15px currentColor">Button<i style="display:inline-block;width:10px;height:10px;border:2px solid #A09878;border-radius:50%;margin:0 0 0 5px"></i></div></div>
  <div class="a" style="left:1073.3px;top:429.0px;width:29.0px;height:10.6px;border-radius:1.8px;background:#6461B8;border:0.7px solid #6A66C0;box-shadow:0 0 0 0.8px rgba(0,0,0,.55)"><div style="position:absolute;left:50%;top:50%;transform:translate(-50%,-50%) scale(0.33);display:flex;align-items:center;font-size:10px;line-height:12px;color:#A09878;white-space:nowrap;-webkit-text-stroke:0.15px currentColor">Button<i style="display:inline-block;width:10px;height:10px;border:2px solid #A09878;border-radius:50%;margin:0 0 0 5px"></i></div></div>
  <div class="a" style="left:690.0px;top:457.9px;width:17.0px;height:8.0px;border-radius:1.5px;background:#040408;border:0.7px solid #040408;box-shadow:0 0 0 0.8px rgba(0,0,0,.55)"><div style="position:absolute;left:50%;top:50%;transform:translate(-50%,-50%) scale(0.27);display:flex;align-items:center;font-size:10px;line-height:12px;color:#F0F0F0;white-space:nowrap;-webkit-text-stroke:0.15px currentColor">Button</div></div>
  <div class="a" style="left:713.7px;top:457.6px;width:18.6px;height:8.6px;border-radius:1.5px;background:#040408;border:0.7px solid #040408;box-shadow:0 0 0 0.8px rgba(0,0,0,.55)"><div style="position:absolute;left:50%;top:50%;transform:translate(-50%,-50%) scale(0.27);display:flex;align-items:center;font-size:10px;line-height:12px;color:#F0F0F0;white-space:nowrap;-webkit-text-stroke:0.15px currentColor">Button</div></div>
  <div class="a" style="left:739.0px;top:456.6px;width:23.1px;height:10.6px;border-radius:1.8px;background:#040408;border:0.7px solid #040408;box-shadow:0 0 0 0.8px rgba(0,0,0,.55)"><div style="position:absolute;left:50%;top:50%;transform:translate(-50%,-50%) scale(0.33);display:flex;align-items:center;font-size:10px;line-height:12px;color:#F0F0F0;white-space:nowrap;-webkit-text-stroke:0.15px currentColor">Button</div></div>
  <div class="a" style="left:851.5px;top:457.9px;width:22.5px;height:8.0px;border-radius:1.5px;background:#040408;border:0.7px solid #040408;box-shadow:0 0 0 0.8px rgba(0,0,0,.55)"><div style="position:absolute;left:50%;top:50%;transform:translate(-50%,-50%) scale(0.27);display:flex;align-items:center;font-size:10px;line-height:12px;color:#F0F0F0;white-space:nowrap;-webkit-text-stroke:0.15px currentColor"><i style="display:inline-block;width:10px;height:10px;border:2px solid #F0F0F0;border-radius:50%;margin:0 5px 0 0"></i>Button</div></div>
  <div class="a" style="left:881.2px;top:457.6px;width:24.1px;height:8.6px;border-radius:1.5px;background:#040408;border:0.7px solid #040408;box-shadow:0 0 0 0.8px rgba(0,0,0,.55)"><div style="position:absolute;left:50%;top:50%;transform:translate(-50%,-50%) scale(0.27);display:flex;align-items:center;font-size:10px;line-height:12px;color:#F0F0F0;white-space:nowrap;-webkit-text-stroke:0.15px currentColor"><i style="display:inline-block;width:10px;height:10px;border:2px solid #F0F0F0;border-radius:50%;margin:0 5px 0 0"></i>Button</div></div>
  <div class="a" style="left:911.7px;top:456.6px;width:29.3px;height:10.6px;border-radius:1.8px;background:#040408;border:0.7px solid #040408;box-shadow:0 0 0 0.8px rgba(0,0,0,.55)"><div style="position:absolute;left:50%;top:50%;transform:translate(-50%,-50%) scale(0.33);display:flex;align-items:center;font-size:10px;line-height:12px;color:#F0F0F0;white-space:nowrap;-webkit-text-stroke:0.15px currentColor"><i style="display:inline-block;width:10px;height:10px;border:2px solid #F0F0F0;border-radius:50%;margin:0 5px 0 0"></i>Button</div></div>
  <div class="a" style="left:1013.1px;top:457.9px;width:22.5px;height:8.0px;border-radius:1.5px;background:#040408;border:0.7px solid #040408;box-shadow:0 0 0 0.8px rgba(0,0,0,.55)"><div style="position:absolute;left:50%;top:50%;transform:translate(-50%,-50%) scale(0.27);display:flex;align-items:center;font-size:10px;line-height:12px;color:#F0F0F0;white-space:nowrap;-webkit-text-stroke:0.15px currentColor">Button<i style="display:inline-block;width:10px;height:10px;border:2px solid #F0F0F0;border-radius:50%;margin:0 0 0 5px"></i></div></div>
  <div class="a" style="left:1042.7px;top:457.6px;width:23.5px;height:8.6px;border-radius:1.5px;background:#040408;border:0.7px solid #040408;box-shadow:0 0 0 0.8px rgba(0,0,0,.55)"><div style="position:absolute;left:50%;top:50%;transform:translate(-50%,-50%) scale(0.27);display:flex;align-items:center;font-size:10px;line-height:12px;color:#F0F0F0;white-space:nowrap;-webkit-text-stroke:0.15px currentColor">Button<i style="display:inline-block;width:10px;height:10px;border:2px solid #F0F0F0;border-radius:50%;margin:0 0 0 5px"></i></div></div>
  <div class="a" style="left:1073.3px;top:456.6px;width:29.0px;height:10.6px;border-radius:1.8px;background:#040408;border:0.7px solid #040408;box-shadow:0 0 0 0.8px rgba(0,0,0,.55)"><div style="position:absolute;left:50%;top:50%;transform:translate(-50%,-50%) scale(0.33);display:flex;align-items:center;font-size:10px;line-height:12px;color:#F0F0F0;white-space:nowrap;-webkit-text-stroke:0.15px currentColor">Button<i style="display:inline-block;width:10px;height:10px;border:2px solid #F0F0F0;border-radius:50%;margin:0 0 0 5px"></i></div></div>
  <div class="a" style="left:690.0px;top:475.1px;width:17.0px;height:8.0px;border-radius:1.5px;background:#2A2A3A;border:0.7px solid #2A2A3A;box-shadow:0 0 0 0.8px rgba(0,0,0,.55)"><div style="position:absolute;left:50%;top:50%;transform:translate(-50%,-50%) scale(0.27);display:flex;align-items:center;font-size:10px;line-height:12px;color:#D8D8E0;white-space:nowrap;-webkit-text-stroke:0.15px currentColor">Button</div></div>
  <div class="a" style="left:713.7px;top:474.8px;width:18.6px;height:8.6px;border-radius:1.5px;background:#2A2A3A;border:0.7px solid #2A2A3A;box-shadow:0 0 0 0.8px rgba(0,0,0,.55)"><div style="position:absolute;left:50%;top:50%;transform:translate(-50%,-50%) scale(0.27);display:flex;align-items:center;font-size:10px;line-height:12px;color:#D8D8E0;white-space:nowrap;-webkit-text-stroke:0.15px currentColor">Button</div></div>
  <div class="a" style="left:739.0px;top:473.8px;width:23.1px;height:10.6px;border-radius:1.8px;background:#2A2A3A;border:0.7px solid #2A2A3A;box-shadow:0 0 0 0.8px rgba(0,0,0,.55)"><div style="position:absolute;left:50%;top:50%;transform:translate(-50%,-50%) scale(0.33);display:flex;align-items:center;font-size:10px;line-height:12px;color:#D8D8E0;white-space:nowrap;-webkit-text-stroke:0.15px currentColor">Button</div></div>
  <div class="a" style="left:851.5px;top:475.1px;width:22.5px;height:8.0px;border-radius:1.5px;background:#2A2A3A;border:0.7px solid #2A2A3A;box-shadow:0 0 0 0.8px rgba(0,0,0,.55)"><div style="position:absolute;left:50%;top:50%;transform:translate(-50%,-50%) scale(0.27);display:flex;align-items:center;font-size:10px;line-height:12px;color:#D8D8E0;white-space:nowrap;-webkit-text-stroke:0.15px currentColor"><i style="display:inline-block;width:10px;height:10px;border:2px solid #D8D8E0;border-radius:50%;margin:0 5px 0 0"></i>Button</div></div>
  <div class="a" style="left:881.2px;top:474.8px;width:24.1px;height:8.6px;border-radius:1.5px;background:#2A2A3A;border:0.7px solid #2A2A3A;box-shadow:0 0 0 0.8px rgba(0,0,0,.55)"><div style="position:absolute;left:50%;top:50%;transform:translate(-50%,-50%) scale(0.27);display:flex;align-items:center;font-size:10px;line-height:12px;color:#D8D8E0;white-space:nowrap;-webkit-text-stroke:0.15px currentColor"><i style="display:inline-block;width:10px;height:10px;border:2px solid #D8D8E0;border-radius:50%;margin:0 5px 0 0"></i>Button</div></div>
  <div class="a" style="left:911.7px;top:473.8px;width:29.3px;height:10.6px;border-radius:1.8px;background:#2A2A3A;border:0.7px solid #2A2A3A;box-shadow:0 0 0 0.8px rgba(0,0,0,.55)"><div style="position:absolute;left:50%;top:50%;transform:translate(-50%,-50%) scale(0.33);display:flex;align-items:center;font-size:10px;line-height:12px;color:#D8D8E0;white-space:nowrap;-webkit-text-stroke:0.15px currentColor"><i style="display:inline-block;width:10px;height:10px;border:2px solid #D8D8E0;border-radius:50%;margin:0 5px 0 0"></i>Button</div></div>
  <div class="a" style="left:1013.1px;top:475.1px;width:22.5px;height:8.0px;border-radius:1.5px;background:#2A2A3A;border:0.7px solid #2A2A3A;box-shadow:0 0 0 0.8px rgba(0,0,0,.55)"><div style="position:absolute;left:50%;top:50%;transform:translate(-50%,-50%) scale(0.27);display:flex;align-items:center;font-size:10px;line-height:12px;color:#D8D8E0;white-space:nowrap;-webkit-text-stroke:0.15px currentColor">Button<i style="display:inline-block;width:10px;height:10px;border:2px solid #D8D8E0;border-radius:50%;margin:0 0 0 5px"></i></div></div>
  <div class="a" style="left:1042.7px;top:474.8px;width:23.5px;height:8.6px;border-radius:1.5px;background:#2A2A3A;border:0.7px solid #2A2A3A;box-shadow:0 0 0 0.8px rgba(0,0,0,.55)"><div style="position:absolute;left:50%;top:50%;transform:translate(-50%,-50%) scale(0.27);display:flex;align-items:center;font-size:10px;line-height:12px;color:#D8D8E0;white-space:nowrap;-webkit-text-stroke:0.15px currentColor">Button<i style="display:inline-block;width:10px;height:10px;border:2px solid #D8D8E0;border-radius:50%;margin:0 0 0 5px"></i></div></div>
  <div class="a" style="left:1073.3px;top:473.8px;width:29.0px;height:10.6px;border-radius:1.8px;background:#2A2A3A;border:0.7px solid #2A2A3A;box-shadow:0 0 0 0.8px rgba(0,0,0,.55)"><div style="position:absolute;left:50%;top:50%;transform:translate(-50%,-50%) scale(0.33);display:flex;align-items:center;font-size:10px;line-height:12px;color:#D8D8E0;white-space:nowrap;-webkit-text-stroke:0.15px currentColor">Button<i style="display:inline-block;width:10px;height:10px;border:2px solid #D8D8E0;border-radius:50%;margin:0 0 0 5px"></i></div></div>
  <div class="a" style="left:690.0px;top:492.4px;width:17.0px;height:8.0px;border-radius:1.5px;background:#262632;border:0.7px solid #262632;box-shadow:0 0 0 0.8px rgba(0,0,0,.55)"><div style="position:absolute;left:50%;top:50%;transform:translate(-50%,-50%) scale(0.27);display:flex;align-items:center;font-size:10px;line-height:12px;color:#6A6A72;white-space:nowrap;-webkit-text-stroke:0.15px currentColor">Button</div></div>
  <div class="a" style="left:713.7px;top:492.1px;width:18.6px;height:8.6px;border-radius:1.5px;background:#262632;border:0.7px solid #262632;box-shadow:0 0 0 0.8px rgba(0,0,0,.55)"><div style="position:absolute;left:50%;top:50%;transform:translate(-50%,-50%) scale(0.27);display:flex;align-items:center;font-size:10px;line-height:12px;color:#6A6A72;white-space:nowrap;-webkit-text-stroke:0.15px currentColor">Button</div></div>
  <div class="a" style="left:739.0px;top:491.1px;width:23.1px;height:10.6px;border-radius:1.8px;background:#262632;border:0.7px solid #262632;box-shadow:0 0 0 0.8px rgba(0,0,0,.55)"><div style="position:absolute;left:50%;top:50%;transform:translate(-50%,-50%) scale(0.33);display:flex;align-items:center;font-size:10px;line-height:12px;color:#6A6A72;white-space:nowrap;-webkit-text-stroke:0.15px currentColor">Button</div></div>
  <div class="a" style="left:851.5px;top:492.4px;width:22.5px;height:8.0px;border-radius:1.5px;background:#262632;border:0.7px solid #262632;box-shadow:0 0 0 0.8px rgba(0,0,0,.55)"><div style="position:absolute;left:50%;top:50%;transform:translate(-50%,-50%) scale(0.27);display:flex;align-items:center;font-size:10px;line-height:12px;color:#6A6A72;white-space:nowrap;-webkit-text-stroke:0.15px currentColor"><i style="display:inline-block;width:10px;height:10px;border:2px solid #6A6A72;border-radius:50%;margin:0 5px 0 0"></i>Button</div></div>
  <div class="a" style="left:881.2px;top:492.1px;width:24.1px;height:8.6px;border-radius:1.5px;background:#262632;border:0.7px solid #262632;box-shadow:0 0 0 0.8px rgba(0,0,0,.55)"><div style="position:absolute;left:50%;top:50%;transform:translate(-50%,-50%) scale(0.27);display:flex;align-items:center;font-size:10px;line-height:12px;color:#6A6A72;white-space:nowrap;-webkit-text-stroke:0.15px currentColor"><i style="display:inline-block;width:10px;height:10px;border:2px solid #6A6A72;border-radius:50%;margin:0 5px 0 0"></i>Button</div></div>
  <div class="a" style="left:911.7px;top:491.1px;width:29.3px;height:10.6px;border-radius:1.8px;background:#262632;border:0.7px solid #262632;box-shadow:0 0 0 0.8px rgba(0,0,0,.55)"><div style="position:absolute;left:50%;top:50%;transform:translate(-50%,-50%) scale(0.33);display:flex;align-items:center;font-size:10px;line-height:12px;color:#6A6A72;white-space:nowrap;-webkit-text-stroke:0.15px currentColor"><i style="display:inline-block;width:10px;height:10px;border:2px solid #6A6A72;border-radius:50%;margin:0 5px 0 0"></i>Button</div></div>
  <div class="a" style="left:1013.1px;top:492.4px;width:22.5px;height:8.0px;border-radius:1.5px;background:#262632;border:0.7px solid #262632;box-shadow:0 0 0 0.8px rgba(0,0,0,.55)"><div style="position:absolute;left:50%;top:50%;transform:translate(-50%,-50%) scale(0.27);display:flex;align-items:center;font-size:10px;line-height:12px;color:#6A6A72;white-space:nowrap;-webkit-text-stroke:0.15px currentColor">Button<i style="display:inline-block;width:10px;height:10px;border:2px solid #6A6A72;border-radius:50%;margin:0 0 0 5px"></i></div></div>
  <div class="a" style="left:1042.7px;top:492.1px;width:23.5px;height:8.6px;border-radius:1.5px;background:#262632;border:0.7px solid #262632;box-shadow:0 0 0 0.8px rgba(0,0,0,.55)"><div style="position:absolute;left:50%;top:50%;transform:translate(-50%,-50%) scale(0.27);display:flex;align-items:center;font-size:10px;line-height:12px;color:#6A6A72;white-space:nowrap;-webkit-text-stroke:0.15px currentColor">Button<i style="display:inline-block;width:10px;height:10px;border:2px solid #6A6A72;border-radius:50%;margin:0 0 0 5px"></i></div></div>
  <div class="a" style="left:1073.3px;top:491.1px;width:29.0px;height:10.6px;border-radius:1.8px;background:#262632;border:0.7px solid #262632;box-shadow:0 0 0 0.8px rgba(0,0,0,.55)"><div style="position:absolute;left:50%;top:50%;transform:translate(-50%,-50%) scale(0.33);display:flex;align-items:center;font-size:10px;line-height:12px;color:#6A6A72;white-space:nowrap;-webkit-text-stroke:0.15px currentColor">Button<i style="display:inline-block;width:10px;height:10px;border:2px solid #6A6A72;border-radius:50%;margin:0 0 0 5px"></i></div></div>
  <div class="a" style="left:690.0px;top:519.9px;width:17.0px;height:8.0px;border-radius:1.5px;background:#FFFFFF;border:0.7px solid #FFFFFF;box-shadow:0 0 0 0.8px rgba(0,0,0,.55)"><div style="position:absolute;left:50%;top:50%;transform:translate(-50%,-50%) scale(0.27);display:flex;align-items:center;font-size:10px;line-height:12px;color:#1A1A22;white-space:nowrap;-webkit-text-stroke:0.15px currentColor">Button</div></div>
  <div class="a" style="left:713.7px;top:519.6px;width:18.6px;height:8.6px;border-radius:1.5px;background:#FFFFFF;border:0.7px solid #FFFFFF;box-shadow:0 0 0 0.8px rgba(0,0,0,.55)"><div style="position:absolute;left:50%;top:50%;transform:translate(-50%,-50%) scale(0.27);display:flex;align-items:center;font-size:10px;line-height:12px;color:#1A1A22;white-space:nowrap;-webkit-text-stroke:0.15px currentColor">Button</div></div>
  <div class="a" style="left:739.0px;top:518.6px;width:23.1px;height:10.6px;border-radius:1.8px;background:#FFFFFF;border:0.7px solid #FFFFFF;box-shadow:0 0 0 0.8px rgba(0,0,0,.55)"><div style="position:absolute;left:50%;top:50%;transform:translate(-50%,-50%) scale(0.33);display:flex;align-items:center;font-size:10px;line-height:12px;color:#1A1A22;white-space:nowrap;-webkit-text-stroke:0.15px currentColor">Button</div></div>
  <div class="a" style="left:851.5px;top:519.9px;width:22.5px;height:8.0px;border-radius:1.5px;background:#FFFFFF;border:0.7px solid #FFFFFF;box-shadow:0 0 0 0.8px rgba(0,0,0,.55)"><div style="position:absolute;left:50%;top:50%;transform:translate(-50%,-50%) scale(0.27);display:flex;align-items:center;font-size:10px;line-height:12px;color:#1A1A22;white-space:nowrap;-webkit-text-stroke:0.15px currentColor"><i style="display:inline-block;width:10px;height:10px;border:2px solid #1A1A22;border-radius:50%;margin:0 5px 0 0"></i>Button</div></div>
  <div class="a" style="left:881.2px;top:519.6px;width:24.1px;height:8.6px;border-radius:1.5px;background:#FFFFFF;border:0.7px solid #FFFFFF;box-shadow:0 0 0 0.8px rgba(0,0,0,.55)"><div style="position:absolute;left:50%;top:50%;transform:translate(-50%,-50%) scale(0.27);display:flex;align-items:center;font-size:10px;line-height:12px;color:#1A1A22;white-space:nowrap;-webkit-text-stroke:0.15px currentColor"><i style="display:inline-block;width:10px;height:10px;border:2px solid #1A1A22;border-radius:50%;margin:0 5px 0 0"></i>Button</div></div>
  <div class="a" style="left:911.7px;top:518.6px;width:29.3px;height:10.6px;border-radius:1.8px;background:#FFFFFF;border:0.7px solid #FFFFFF;box-shadow:0 0 0 0.8px rgba(0,0,0,.55)"><div style="position:absolute;left:50%;top:50%;transform:translate(-50%,-50%) scale(0.33);display:flex;align-items:center;font-size:10px;line-height:12px;color:#1A1A22;white-space:nowrap;-webkit-text-stroke:0.15px currentColor"><i style="display:inline-block;width:10px;height:10px;border:2px solid #1A1A22;border-radius:50%;margin:0 5px 0 0"></i>Button</div></div>
  <div class="a" style="left:1013.1px;top:519.9px;width:22.5px;height:8.0px;border-radius:1.5px;background:#FFFFFF;border:0.7px solid #FFFFFF;box-shadow:0 0 0 0.8px rgba(0,0,0,.55)"><div style="position:absolute;left:50%;top:50%;transform:translate(-50%,-50%) scale(0.27);display:flex;align-items:center;font-size:10px;line-height:12px;color:#1A1A22;white-space:nowrap;-webkit-text-stroke:0.15px currentColor">Button<i style="display:inline-block;width:10px;height:10px;border:2px solid #1A1A22;border-radius:50%;margin:0 0 0 5px"></i></div></div>
  <div class="a" style="left:1042.7px;top:519.6px;width:23.5px;height:8.6px;border-radius:1.5px;background:#FFFFFF;border:0.7px solid #FFFFFF;box-shadow:0 0 0 0.8px rgba(0,0,0,.55)"><div style="position:absolute;left:50%;top:50%;transform:translate(-50%,-50%) scale(0.27);display:flex;align-items:center;font-size:10px;line-height:12px;color:#1A1A22;white-space:nowrap;-webkit-text-stroke:0.15px currentColor">Button<i style="display:inline-block;width:10px;height:10px;border:2px solid #1A1A22;border-radius:50%;margin:0 0 0 5px"></i></div></div>
  <div class="a" style="left:1073.3px;top:518.6px;width:29.0px;height:10.6px;border-radius:1.8px;background:#FFFFFF;border:0.7px solid #FFFFFF;box-shadow:0 0 0 0.8px rgba(0,0,0,.55)"><div style="position:absolute;left:50%;top:50%;transform:translate(-50%,-50%) scale(0.33);display:flex;align-items:center;font-size:10px;line-height:12px;color:#1A1A22;white-space:nowrap;-webkit-text-stroke:0.15px currentColor">Button<i style="display:inline-block;width:10px;height:10px;border:2px solid #1A1A22;border-radius:50%;margin:0 0 0 5px"></i></div></div>
  <div class="a" style="left:690.0px;top:537.1px;width:17.0px;height:8.0px;border-radius:1.5px;background:#B8B8CA;border:0.7px solid #C4C4D4;box-shadow:0 0 0 0.8px rgba(0,0,0,.55)"><div style="position:absolute;left:50%;top:50%;transform:translate(-50%,-50%) scale(0.27);display:flex;align-items:center;font-size:10px;line-height:12px;color:#1A1A22;white-space:nowrap;-webkit-text-stroke:0.15px currentColor">Button</div></div>
  <div class="a" style="left:713.7px;top:536.9px;width:18.6px;height:8.6px;border-radius:1.5px;background:#B8B8CA;border:0.7px solid #C4C4D4;box-shadow:0 0 0 0.8px rgba(0,0,0,.55)"><div style="position:absolute;left:50%;top:50%;transform:translate(-50%,-50%) scale(0.27);display:flex;align-items:center;font-size:10px;line-height:12px;color:#1A1A22;white-space:nowrap;-webkit-text-stroke:0.15px currentColor">Button</div></div>
  <div class="a" style="left:739.0px;top:535.9px;width:23.1px;height:10.6px;border-radius:1.8px;background:#B8B8CA;border:0.7px solid #C4C4D4;box-shadow:0 0 0 0.8px rgba(0,0,0,.55)"><div style="position:absolute;left:50%;top:50%;transform:translate(-50%,-50%) scale(0.33);display:flex;align-items:center;font-size:10px;line-height:12px;color:#1A1A22;white-space:nowrap;-webkit-text-stroke:0.15px currentColor">Button</div></div>
  <div class="a" style="left:851.5px;top:537.1px;width:22.5px;height:8.0px;border-radius:1.5px;background:#B8B8CA;border:0.7px solid #C4C4D4;box-shadow:0 0 0 0.8px rgba(0,0,0,.55)"><div style="position:absolute;left:50%;top:50%;transform:translate(-50%,-50%) scale(0.27);display:flex;align-items:center;font-size:10px;line-height:12px;color:#1A1A22;white-space:nowrap;-webkit-text-stroke:0.15px currentColor"><i style="display:inline-block;width:10px;height:10px;border:2px solid #1A1A22;border-radius:50%;margin:0 5px 0 0"></i>Button</div></div>
  <div class="a" style="left:881.2px;top:536.9px;width:24.1px;height:8.6px;border-radius:1.5px;background:#B8B8CA;border:0.7px solid #C4C4D4;box-shadow:0 0 0 0.8px rgba(0,0,0,.55)"><div style="position:absolute;left:50%;top:50%;transform:translate(-50%,-50%) scale(0.27);display:flex;align-items:center;font-size:10px;line-height:12px;color:#1A1A22;white-space:nowrap;-webkit-text-stroke:0.15px currentColor"><i style="display:inline-block;width:10px;height:10px;border:2px solid #1A1A22;border-radius:50%;margin:0 5px 0 0"></i>Button</div></div>
  <div class="a" style="left:911.7px;top:535.9px;width:29.3px;height:10.6px;border-radius:1.8px;background:#B8B8CA;border:0.7px solid #C4C4D4;box-shadow:0 0 0 0.8px rgba(0,0,0,.55)"><div style="position:absolute;left:50%;top:50%;transform:translate(-50%,-50%) scale(0.33);display:flex;align-items:center;font-size:10px;line-height:12px;color:#1A1A22;white-space:nowrap;-webkit-text-stroke:0.15px currentColor"><i style="display:inline-block;width:10px;height:10px;border:2px solid #1A1A22;border-radius:50%;margin:0 5px 0 0"></i>Button</div></div>
  <div class="a" style="left:1013.1px;top:537.1px;width:22.5px;height:8.0px;border-radius:1.5px;background:#B8B8CA;border:0.7px solid #C4C4D4;box-shadow:0 0 0 0.8px rgba(0,0,0,.55)"><div style="position:absolute;left:50%;top:50%;transform:translate(-50%,-50%) scale(0.27);display:flex;align-items:center;font-size:10px;line-height:12px;color:#1A1A22;white-space:nowrap;-webkit-text-stroke:0.15px currentColor">Button<i style="display:inline-block;width:10px;height:10px;border:2px solid #1A1A22;border-radius:50%;margin:0 0 0 5px"></i></div></div>
  <div class="a" style="left:1042.7px;top:536.9px;width:23.5px;height:8.6px;border-radius:1.5px;background:#B8B8CA;border:0.7px solid #C4C4D4;box-shadow:0 0 0 0.8px rgba(0,0,0,.55)"><div style="position:absolute;left:50%;top:50%;transform:translate(-50%,-50%) scale(0.27);display:flex;align-items:center;font-size:10px;line-height:12px;color:#1A1A22;white-space:nowrap;-webkit-text-stroke:0.15px currentColor">Button<i style="display:inline-block;width:10px;height:10px;border:2px solid #1A1A22;border-radius:50%;margin:0 0 0 5px"></i></div></div>
  <div class="a" style="left:1073.3px;top:535.9px;width:29.0px;height:10.6px;border-radius:1.8px;background:#B8B8CA;border:0.7px solid #C4C4D4;box-shadow:0 0 0 0.8px rgba(0,0,0,.55)"><div style="position:absolute;left:50%;top:50%;transform:translate(-50%,-50%) scale(0.33);display:flex;align-items:center;font-size:10px;line-height:12px;color:#1A1A22;white-space:nowrap;-webkit-text-stroke:0.15px currentColor">Button<i style="display:inline-block;width:10px;height:10px;border:2px solid #1A1A22;border-radius:50%;margin:0 0 0 5px"></i></div></div>
  <div class="a" style="left:690.0px;top:554.4px;width:17.0px;height:8.0px;border-radius:1.5px;background:#6E6E78;border:0.7px solid #74747E;box-shadow:0 0 0 0.8px rgba(0,0,0,.55)"><div style="position:absolute;left:50%;top:50%;transform:translate(-50%,-50%) scale(0.27);display:flex;align-items:center;font-size:10px;line-height:12px;color:#2A2A30;white-space:nowrap;-webkit-text-stroke:0.15px currentColor">Button</div></div>
  <div class="a" style="left:713.7px;top:554.1px;width:18.6px;height:8.6px;border-radius:1.5px;background:#6E6E78;border:0.7px solid #74747E;box-shadow:0 0 0 0.8px rgba(0,0,0,.55)"><div style="position:absolute;left:50%;top:50%;transform:translate(-50%,-50%) scale(0.27);display:flex;align-items:center;font-size:10px;line-height:12px;color:#2A2A30;white-space:nowrap;-webkit-text-stroke:0.15px currentColor">Button</div></div>
  <div class="a" style="left:739.0px;top:553.1px;width:23.1px;height:10.6px;border-radius:1.8px;background:#6E6E78;border:0.7px solid #74747E;box-shadow:0 0 0 0.8px rgba(0,0,0,.55)"><div style="position:absolute;left:50%;top:50%;transform:translate(-50%,-50%) scale(0.33);display:flex;align-items:center;font-size:10px;line-height:12px;color:#2A2A30;white-space:nowrap;-webkit-text-stroke:0.15px currentColor">Button</div></div>
  <div class="a" style="left:851.5px;top:554.4px;width:22.5px;height:8.0px;border-radius:1.5px;background:#6E6E78;border:0.7px solid #74747E;box-shadow:0 0 0 0.8px rgba(0,0,0,.55)"><div style="position:absolute;left:50%;top:50%;transform:translate(-50%,-50%) scale(0.27);display:flex;align-items:center;font-size:10px;line-height:12px;color:#2A2A30;white-space:nowrap;-webkit-text-stroke:0.15px currentColor"><i style="display:inline-block;width:10px;height:10px;border:2px solid #2A2A30;border-radius:50%;margin:0 5px 0 0"></i>Button</div></div>
  <div class="a" style="left:881.2px;top:554.1px;width:24.1px;height:8.6px;border-radius:1.5px;background:#6E6E78;border:0.7px solid #74747E;box-shadow:0 0 0 0.8px rgba(0,0,0,.55)"><div style="position:absolute;left:50%;top:50%;transform:translate(-50%,-50%) scale(0.27);display:flex;align-items:center;font-size:10px;line-height:12px;color:#2A2A30;white-space:nowrap;-webkit-text-stroke:0.15px currentColor"><i style="display:inline-block;width:10px;height:10px;border:2px solid #2A2A30;border-radius:50%;margin:0 5px 0 0"></i>Button</div></div>
  <div class="a" style="left:911.7px;top:553.1px;width:29.3px;height:10.6px;border-radius:1.8px;background:#6E6E78;border:0.7px solid #74747E;box-shadow:0 0 0 0.8px rgba(0,0,0,.55)"><div style="position:absolute;left:50%;top:50%;transform:translate(-50%,-50%) scale(0.33);display:flex;align-items:center;font-size:10px;line-height:12px;color:#2A2A30;white-space:nowrap;-webkit-text-stroke:0.15px currentColor"><i style="display:inline-block;width:10px;height:10px;border:2px solid #2A2A30;border-radius:50%;margin:0 5px 0 0"></i>Button</div></div>
  <div class="a" style="left:1013.1px;top:554.4px;width:22.5px;height:8.0px;border-radius:1.5px;background:#6E6E78;border:0.7px solid #74747E;box-shadow:0 0 0 0.8px rgba(0,0,0,.55)"><div style="position:absolute;left:50%;top:50%;transform:translate(-50%,-50%) scale(0.27);display:flex;align-items:center;font-size:10px;line-height:12px;color:#2A2A30;white-space:nowrap;-webkit-text-stroke:0.15px currentColor">Button<i style="display:inline-block;width:10px;height:10px;border:2px solid #2A2A30;border-radius:50%;margin:0 0 0 5px"></i></div></div>
  <div class="a" style="left:1042.7px;top:554.1px;width:23.5px;height:8.6px;border-radius:1.5px;background:#6E6E78;border:0.7px solid #74747E;box-shadow:0 0 0 0.8px rgba(0,0,0,.55)"><div style="position:absolute;left:50%;top:50%;transform:translate(-50%,-50%) scale(0.27);display:flex;align-items:center;font-size:10px;line-height:12px;color:#2A2A30;white-space:nowrap;-webkit-text-stroke:0.15px currentColor">Button<i style="display:inline-block;width:10px;height:10px;border:2px solid #2A2A30;border-radius:50%;margin:0 0 0 5px"></i></div></div>
  <div class="a" style="left:1073.3px;top:553.1px;width:29.0px;height:10.6px;border-radius:1.8px;background:#6E6E78;border:0.7px solid #74747E;box-shadow:0 0 0 0.8px rgba(0,0,0,.55)"><div style="position:absolute;left:50%;top:50%;transform:translate(-50%,-50%) scale(0.33);display:flex;align-items:center;font-size:10px;line-height:12px;color:#2A2A30;white-space:nowrap;-webkit-text-stroke:0.15px currentColor">Button<i style="display:inline-block;width:10px;height:10px;border:2px solid #2A2A30;border-radius:50%;margin:0 0 0 5px"></i></div></div>
  <div class="a" style="left:690.0px;top:582.0px;width:17.0px;height:8.0px;border-radius:1.5px;background:#D2CEFF;border:0.7px solid #E0DDFF;box-shadow:0 0 0 0.8px rgba(0,0,0,.55)"><div style="position:absolute;left:50%;top:50%;transform:translate(-50%,-50%) scale(0.27);display:flex;align-items:center;font-size:10px;line-height:12px;color:#4B45FA;white-space:nowrap;-webkit-text-stroke:0.15px currentColor">Button</div></div>
  <div class="a" style="left:713.7px;top:581.7px;width:18.6px;height:8.6px;border-radius:1.5px;background:#D2CEFF;border:0.7px solid #E0DDFF;box-shadow:0 0 0 0.8px rgba(0,0,0,.55)"><div style="position:absolute;left:50%;top:50%;transform:translate(-50%,-50%) scale(0.27);display:flex;align-items:center;font-size:10px;line-height:12px;color:#4B45FA;white-space:nowrap;-webkit-text-stroke:0.15px currentColor">Button</div></div>
  <div class="a" style="left:739.0px;top:580.7px;width:23.1px;height:10.6px;border-radius:1.8px;background:#D2CEFF;border:0.7px solid #E0DDFF;box-shadow:0 0 0 0.8px rgba(0,0,0,.55)"><div style="position:absolute;left:50%;top:50%;transform:translate(-50%,-50%) scale(0.33);display:flex;align-items:center;font-size:10px;line-height:12px;color:#4B45FA;white-space:nowrap;-webkit-text-stroke:0.15px currentColor">Button</div></div>
  <div class="a" style="left:851.5px;top:582.0px;width:22.5px;height:8.0px;border-radius:1.5px;background:#D2CEFF;border:0.7px solid #E0DDFF;box-shadow:0 0 0 0.8px rgba(0,0,0,.55)"><div style="position:absolute;left:50%;top:50%;transform:translate(-50%,-50%) scale(0.27);display:flex;align-items:center;font-size:10px;line-height:12px;color:#4B45FA;white-space:nowrap;-webkit-text-stroke:0.15px currentColor"><i style="display:inline-block;width:10px;height:10px;border:2px solid #4B45FA;border-radius:50%;margin:0 5px 0 0"></i>Button</div></div>
  <div class="a" style="left:881.2px;top:581.7px;width:24.1px;height:8.6px;border-radius:1.5px;background:#D2CEFF;border:0.7px solid #E0DDFF;box-shadow:0 0 0 0.8px rgba(0,0,0,.55)"><div style="position:absolute;left:50%;top:50%;transform:translate(-50%,-50%) scale(0.27);display:flex;align-items:center;font-size:10px;line-height:12px;color:#4B45FA;white-space:nowrap;-webkit-text-stroke:0.15px currentColor"><i style="display:inline-block;width:10px;height:10px;border:2px solid #4B45FA;border-radius:50%;margin:0 5px 0 0"></i>Button</div></div>
  <div class="a" style="left:911.7px;top:580.7px;width:29.3px;height:10.6px;border-radius:1.8px;background:#D2CEFF;border:0.7px solid #E0DDFF;box-shadow:0 0 0 0.8px rgba(0,0,0,.55)"><div style="position:absolute;left:50%;top:50%;transform:translate(-50%,-50%) scale(0.33);display:flex;align-items:center;font-size:10px;line-height:12px;color:#4B45FA;white-space:nowrap;-webkit-text-stroke:0.15px currentColor"><i style="display:inline-block;width:10px;height:10px;border:2px solid #4B45FA;border-radius:50%;margin:0 5px 0 0"></i>Button</div></div>
  <div class="a" style="left:1013.1px;top:582.0px;width:22.5px;height:8.0px;border-radius:1.5px;background:#D2CEFF;border:0.7px solid #E0DDFF;box-shadow:0 0 0 0.8px rgba(0,0,0,.55)"><div style="position:absolute;left:50%;top:50%;transform:translate(-50%,-50%) scale(0.27);display:flex;align-items:center;font-size:10px;line-height:12px;color:#4B45FA;white-space:nowrap;-webkit-text-stroke:0.15px currentColor">Button<i style="display:inline-block;width:10px;height:10px;border:2px solid #4B45FA;border-radius:50%;margin:0 0 0 5px"></i></div></div>
  <div class="a" style="left:1042.7px;top:581.7px;width:23.5px;height:8.6px;border-radius:1.5px;background:#D2CEFF;border:0.7px solid #E0DDFF;box-shadow:0 0 0 0.8px rgba(0,0,0,.55)"><div style="position:absolute;left:50%;top:50%;transform:translate(-50%,-50%) scale(0.27);display:flex;align-items:center;font-size:10px;line-height:12px;color:#4B45FA;white-space:nowrap;-webkit-text-stroke:0.15px currentColor">Button<i style="display:inline-block;width:10px;height:10px;border:2px solid #4B45FA;border-radius:50%;margin:0 0 0 5px"></i></div></div>
  <div class="a" style="left:1073.3px;top:580.7px;width:29.0px;height:10.6px;border-radius:1.8px;background:#D2CEFF;border:0.7px solid #E0DDFF;box-shadow:0 0 0 0.8px rgba(0,0,0,.55)"><div style="position:absolute;left:50%;top:50%;transform:translate(-50%,-50%) scale(0.33);display:flex;align-items:center;font-size:10px;line-height:12px;color:#4B45FA;white-space:nowrap;-webkit-text-stroke:0.15px currentColor">Button<i style="display:inline-block;width:10px;height:10px;border:2px solid #4B45FA;border-radius:50%;margin:0 0 0 5px"></i></div></div>
  <div class="a" style="left:690.0px;top:599.2px;width:17.0px;height:8.0px;border-radius:1.5px;background:#C2BEFF;border:0.7px solid #D6D3FF;box-shadow:0 0 0 0.8px rgba(0,0,0,.55)"><div style="position:absolute;left:50%;top:50%;transform:translate(-50%,-50%) scale(0.27);display:flex;align-items:center;font-size:10px;line-height:12px;color:#4B45FA;white-space:nowrap;-webkit-text-stroke:0.15px currentColor">Button</div></div>
  <div class="a" style="left:713.7px;top:598.9px;width:18.6px;height:8.6px;border-radius:1.5px;background:#C2BEFF;border:0.7px solid #D6D3FF;box-shadow:0 0 0 0.8px rgba(0,0,0,.55)"><div style="position:absolute;left:50%;top:50%;transform:translate(-50%,-50%) scale(0.27);display:flex;align-items:center;font-size:10px;line-height:12px;color:#4B45FA;white-space:nowrap;-webkit-text-stroke:0.15px currentColor">Button</div></div>
  <div class="a" style="left:739.0px;top:597.9px;width:23.1px;height:10.6px;border-radius:1.8px;background:#C2BEFF;border:0.7px solid #D6D3FF;box-shadow:0 0 0 0.8px rgba(0,0,0,.55)"><div style="position:absolute;left:50%;top:50%;transform:translate(-50%,-50%) scale(0.33);display:flex;align-items:center;font-size:10px;line-height:12px;color:#4B45FA;white-space:nowrap;-webkit-text-stroke:0.15px currentColor">Button</div></div>
  <div class="a" style="left:851.5px;top:599.2px;width:22.5px;height:8.0px;border-radius:1.5px;background:#C2BEFF;border:0.7px solid #D6D3FF;box-shadow:0 0 0 0.8px rgba(0,0,0,.55)"><div style="position:absolute;left:50%;top:50%;transform:translate(-50%,-50%) scale(0.27);display:flex;align-items:center;font-size:10px;line-height:12px;color:#4B45FA;white-space:nowrap;-webkit-text-stroke:0.15px currentColor"><i style="display:inline-block;width:10px;height:10px;border:2px solid #4B45FA;border-radius:50%;margin:0 5px 0 0"></i>Button</div></div>
  <div class="a" style="left:881.2px;top:598.9px;width:24.1px;height:8.6px;border-radius:1.5px;background:#C2BEFF;border:0.7px solid #D6D3FF;box-shadow:0 0 0 0.8px rgba(0,0,0,.55)"><div style="position:absolute;left:50%;top:50%;transform:translate(-50%,-50%) scale(0.27);display:flex;align-items:center;font-size:10px;line-height:12px;color:#4B45FA;white-space:nowrap;-webkit-text-stroke:0.15px currentColor"><i style="display:inline-block;width:10px;height:10px;border:2px solid #4B45FA;border-radius:50%;margin:0 5px 0 0"></i>Button</div></div>
  <div class="a" style="left:911.7px;top:597.9px;width:29.3px;height:10.6px;border-radius:1.8px;background:#C2BEFF;border:0.7px solid #D6D3FF;box-shadow:0 0 0 0.8px rgba(0,0,0,.55)"><div style="position:absolute;left:50%;top:50%;transform:translate(-50%,-50%) scale(0.33);display:flex;align-items:center;font-size:10px;line-height:12px;color:#4B45FA;white-space:nowrap;-webkit-text-stroke:0.15px currentColor"><i style="display:inline-block;width:10px;height:10px;border:2px solid #4B45FA;border-radius:50%;margin:0 5px 0 0"></i>Button</div></div>
  <div class="a" style="left:1013.1px;top:599.2px;width:22.5px;height:8.0px;border-radius:1.5px;background:#C2BEFF;border:0.7px solid #D6D3FF;box-shadow:0 0 0 0.8px rgba(0,0,0,.55)"><div style="position:absolute;left:50%;top:50%;transform:translate(-50%,-50%) scale(0.27);display:flex;align-items:center;font-size:10px;line-height:12px;color:#4B45FA;white-space:nowrap;-webkit-text-stroke:0.15px currentColor">Button<i style="display:inline-block;width:10px;height:10px;border:2px solid #4B45FA;border-radius:50%;margin:0 0 0 5px"></i></div></div>
  <div class="a" style="left:1042.7px;top:598.9px;width:23.5px;height:8.6px;border-radius:1.5px;background:#C2BEFF;border:0.7px solid #D6D3FF;box-shadow:0 0 0 0.8px rgba(0,0,0,.55)"><div style="position:absolute;left:50%;top:50%;transform:translate(-50%,-50%) scale(0.27);display:flex;align-items:center;font-size:10px;line-height:12px;color:#4B45FA;white-space:nowrap;-webkit-text-stroke:0.15px currentColor">Button<i style="display:inline-block;width:10px;height:10px;border:2px solid #4B45FA;border-radius:50%;margin:0 0 0 5px"></i></div></div>
  <div class="a" style="left:1073.3px;top:597.9px;width:29.0px;height:10.6px;border-radius:1.8px;background:#C2BEFF;border:0.7px solid #D6D3FF;box-shadow:0 0 0 0.8px rgba(0,0,0,.55)"><div style="position:absolute;left:50%;top:50%;transform:translate(-50%,-50%) scale(0.33);display:flex;align-items:center;font-size:10px;line-height:12px;color:#4B45FA;white-space:nowrap;-webkit-text-stroke:0.15px currentColor">Button<i style="display:inline-block;width:10px;height:10px;border:2px solid #4B45FA;border-radius:50%;margin:0 0 0 5px"></i></div></div>
  <div class="a" style="left:690.0px;top:616.5px;width:17.0px;height:8.0px;border-radius:1.5px;background:#7C78B4;border:0.7px solid #8480BC;box-shadow:0 0 0 0.8px rgba(0,0,0,.55)"><div style="position:absolute;left:50%;top:50%;transform:translate(-50%,-50%) scale(0.27);display:flex;align-items:center;font-size:10px;line-height:12px;color:#3E3AB0;white-space:nowrap;-webkit-text-stroke:0.15px currentColor">Button</div></div>
  <div class="a" style="left:713.7px;top:616.2px;width:18.6px;height:8.6px;border-radius:1.5px;background:#7C78B4;border:0.7px solid #8480BC;box-shadow:0 0 0 0.8px rgba(0,0,0,.55)"><div style="position:absolute;left:50%;top:50%;transform:translate(-50%,-50%) scale(0.27);display:flex;align-items:center;font-size:10px;line-height:12px;color:#3E3AB0;white-space:nowrap;-webkit-text-stroke:0.15px currentColor">Button</div></div>
  <div class="a" style="left:739.0px;top:615.2px;width:23.1px;height:10.6px;border-radius:1.8px;background:#7C78B4;border:0.7px solid #8480BC;box-shadow:0 0 0 0.8px rgba(0,0,0,.55)"><div style="position:absolute;left:50%;top:50%;transform:translate(-50%,-50%) scale(0.33);display:flex;align-items:center;font-size:10px;line-height:12px;color:#3E3AB0;white-space:nowrap;-webkit-text-stroke:0.15px currentColor">Button</div></div>
  <div class="a" style="left:851.5px;top:616.5px;width:22.5px;height:8.0px;border-radius:1.5px;background:#7C78B4;border:0.7px solid #8480BC;box-shadow:0 0 0 0.8px rgba(0,0,0,.55)"><div style="position:absolute;left:50%;top:50%;transform:translate(-50%,-50%) scale(0.27);display:flex;align-items:center;font-size:10px;line-height:12px;color:#3E3AB0;white-space:nowrap;-webkit-text-stroke:0.15px currentColor"><i style="display:inline-block;width:10px;height:10px;border:2px solid #3E3AB0;border-radius:50%;margin:0 5px 0 0"></i>Button</div></div>
  <div class="a" style="left:881.2px;top:616.2px;width:24.1px;height:8.6px;border-radius:1.5px;background:#7C78B4;border:0.7px solid #8480BC;box-shadow:0 0 0 0.8px rgba(0,0,0,.55)"><div style="position:absolute;left:50%;top:50%;transform:translate(-50%,-50%) scale(0.27);display:flex;align-items:center;font-size:10px;line-height:12px;color:#3E3AB0;white-space:nowrap;-webkit-text-stroke:0.15px currentColor"><i style="display:inline-block;width:10px;height:10px;border:2px solid #3E3AB0;border-radius:50%;margin:0 5px 0 0"></i>Button</div></div>
  <div class="a" style="left:911.7px;top:615.2px;width:29.3px;height:10.6px;border-radius:1.8px;background:#7C78B4;border:0.7px solid #8480BC;box-shadow:0 0 0 0.8px rgba(0,0,0,.55)"><div style="position:absolute;left:50%;top:50%;transform:translate(-50%,-50%) scale(0.33);display:flex;align-items:center;font-size:10px;line-height:12px;color:#3E3AB0;white-space:nowrap;-webkit-text-stroke:0.15px currentColor"><i style="display:inline-block;width:10px;height:10px;border:2px solid #3E3AB0;border-radius:50%;margin:0 5px 0 0"></i>Button</div></div>
  <div class="a" style="left:1013.1px;top:616.5px;width:22.5px;height:8.0px;border-radius:1.5px;background:#7C78B4;border:0.7px solid #8480BC;box-shadow:0 0 0 0.8px rgba(0,0,0,.55)"><div style="position:absolute;left:50%;top:50%;transform:translate(-50%,-50%) scale(0.27);display:flex;align-items:center;font-size:10px;line-height:12px;color:#3E3AB0;white-space:nowrap;-webkit-text-stroke:0.15px currentColor">Button<i style="display:inline-block;width:10px;height:10px;border:2px solid #3E3AB0;border-radius:50%;margin:0 0 0 5px"></i></div></div>
  <div class="a" style="left:1042.7px;top:616.2px;width:23.5px;height:8.6px;border-radius:1.5px;background:#7C78B4;border:0.7px solid #8480BC;box-shadow:0 0 0 0.8px rgba(0,0,0,.55)"><div style="position:absolute;left:50%;top:50%;transform:translate(-50%,-50%) scale(0.27);display:flex;align-items:center;font-size:10px;line-height:12px;color:#3E3AB0;white-space:nowrap;-webkit-text-stroke:0.15px currentColor">Button<i style="display:inline-block;width:10px;height:10px;border:2px solid #3E3AB0;border-radius:50%;margin:0 0 0 5px"></i></div></div>
  <div class="a" style="left:1073.3px;top:615.2px;width:29.0px;height:10.6px;border-radius:1.8px;background:#7C78B4;border:0.7px solid #8480BC;box-shadow:0 0 0 0.8px rgba(0,0,0,.55)"><div style="position:absolute;left:50%;top:50%;transform:translate(-50%,-50%) scale(0.33);display:flex;align-items:center;font-size:10px;line-height:12px;color:#3E3AB0;white-space:nowrap;-webkit-text-stroke:0.15px currentColor">Button<i style="display:inline-block;width:10px;height:10px;border:2px solid #3E3AB0;border-radius:50%;margin:0 0 0 5px"></i></div></div>
  <div class="a" style="left:690.0px;top:644.0px;width:17.0px;height:8.0px;border-radius:1.5px;background:#1C1C24;border:0.9px solid #3E3AC8;box-shadow:0 0 0 0.8px rgba(0,0,0,.55)"><div style="position:absolute;left:50%;top:50%;transform:translate(-50%,-50%) scale(0.27);display:flex;align-items:center;font-size:10px;line-height:12px;color:#5550F0;white-space:nowrap;-webkit-text-stroke:0.15px currentColor">Button</div></div>
  <div class="a" style="left:713.7px;top:643.7px;width:18.6px;height:8.6px;border-radius:1.5px;background:#1C1C24;border:0.9px solid #3E3AC8;box-shadow:0 0 0 0.8px rgba(0,0,0,.55)"><div style="position:absolute;left:50%;top:50%;transform:translate(-50%,-50%) scale(0.27);display:flex;align-items:center;font-size:10px;line-height:12px;color:#5550F0;white-space:nowrap;-webkit-text-stroke:0.15px currentColor">Button</div></div>
  <div class="a" style="left:739.0px;top:642.7px;width:23.1px;height:10.6px;border-radius:1.8px;background:#1C1C24;border:0.9px solid #3E3AC8;box-shadow:0 0 0 0.8px rgba(0,0,0,.55)"><div style="position:absolute;left:50%;top:50%;transform:translate(-50%,-50%) scale(0.33);display:flex;align-items:center;font-size:10px;line-height:12px;color:#5550F0;white-space:nowrap;-webkit-text-stroke:0.15px currentColor">Button</div></div>
  <div class="a" style="left:851.5px;top:644.0px;width:22.5px;height:8.0px;border-radius:1.5px;background:#1C1C24;border:0.9px solid #3E3AC8;box-shadow:0 0 0 0.8px rgba(0,0,0,.55)"><div style="position:absolute;left:50%;top:50%;transform:translate(-50%,-50%) scale(0.27);display:flex;align-items:center;font-size:10px;line-height:12px;color:#5550F0;white-space:nowrap;-webkit-text-stroke:0.15px currentColor"><i style="display:inline-block;width:10px;height:10px;border:2px solid #5550F0;border-radius:50%;margin:0 5px 0 0"></i>Button</div></div>
  <div class="a" style="left:881.2px;top:643.7px;width:24.1px;height:8.6px;border-radius:1.5px;background:#1C1C24;border:0.9px solid #3E3AC8;box-shadow:0 0 0 0.8px rgba(0,0,0,.55)"><div style="position:absolute;left:50%;top:50%;transform:translate(-50%,-50%) scale(0.27);display:flex;align-items:center;font-size:10px;line-height:12px;color:#5550F0;white-space:nowrap;-webkit-text-stroke:0.15px currentColor"><i style="display:inline-block;width:10px;height:10px;border:2px solid #5550F0;border-radius:50%;margin:0 5px 0 0"></i>Button</div></div>
  <div class="a" style="left:911.7px;top:642.7px;width:29.3px;height:10.6px;border-radius:1.8px;background:#1C1C24;border:0.9px solid #3E3AC8;box-shadow:0 0 0 0.8px rgba(0,0,0,.55)"><div style="position:absolute;left:50%;top:50%;transform:translate(-50%,-50%) scale(0.33);display:flex;align-items:center;font-size:10px;line-height:12px;color:#5550F0;white-space:nowrap;-webkit-text-stroke:0.15px currentColor"><i style="display:inline-block;width:10px;height:10px;border:2px solid #5550F0;border-radius:50%;margin:0 5px 0 0"></i>Button</div></div>
  <div class="a" style="left:1013.1px;top:644.0px;width:22.5px;height:8.0px;border-radius:1.5px;background:#1C1C24;border:0.9px solid #3E3AC8;box-shadow:0 0 0 0.8px rgba(0,0,0,.55)"><div style="position:absolute;left:50%;top:50%;transform:translate(-50%,-50%) scale(0.27);display:flex;align-items:center;font-size:10px;line-height:12px;color:#5550F0;white-space:nowrap;-webkit-text-stroke:0.15px currentColor">Button<i style="display:inline-block;width:10px;height:10px;border:2px solid #5550F0;border-radius:50%;margin:0 0 0 5px"></i></div></div>
  <div class="a" style="left:1042.7px;top:643.7px;width:23.5px;height:8.6px;border-radius:1.5px;background:#1C1C24;border:0.9px solid #3E3AC8;box-shadow:0 0 0 0.8px rgba(0,0,0,.55)"><div style="position:absolute;left:50%;top:50%;transform:translate(-50%,-50%) scale(0.27);display:flex;align-items:center;font-size:10px;line-height:12px;color:#5550F0;white-space:nowrap;-webkit-text-stroke:0.15px currentColor">Button<i style="display:inline-block;width:10px;height:10px;border:2px solid #5550F0;border-radius:50%;margin:0 0 0 5px"></i></div></div>
  <div class="a" style="left:1073.3px;top:642.7px;width:29.0px;height:10.6px;border-radius:1.8px;background:#1C1C24;border:0.9px solid #3E3AC8;box-shadow:0 0 0 0.8px rgba(0,0,0,.55)"><div style="position:absolute;left:50%;top:50%;transform:translate(-50%,-50%) scale(0.33);display:flex;align-items:center;font-size:10px;line-height:12px;color:#5550F0;white-space:nowrap;-webkit-text-stroke:0.15px currentColor">Button<i style="display:inline-block;width:10px;height:10px;border:2px solid #5550F0;border-radius:50%;margin:0 0 0 5px"></i></div></div>
  <div class="a" style="left:690.0px;top:661.2px;width:17.0px;height:8.0px;border-radius:1.5px;background:#1E1C30;border:0.9px solid #4440D8;box-shadow:0 0 0 0.8px rgba(0,0,0,.55)"><div style="position:absolute;left:50%;top:50%;transform:translate(-50%,-50%) scale(0.27);display:flex;align-items:center;font-size:10px;line-height:12px;color:#5A55F5;white-space:nowrap;-webkit-text-stroke:0.15px currentColor">Button</div></div>
  <div class="a" style="left:713.7px;top:661.0px;width:18.6px;height:8.6px;border-radius:1.5px;background:#1E1C30;border:0.9px solid #4440D8;box-shadow:0 0 0 0.8px rgba(0,0,0,.55)"><div style="position:absolute;left:50%;top:50%;transform:translate(-50%,-50%) scale(0.27);display:flex;align-items:center;font-size:10px;line-height:12px;color:#5A55F5;white-space:nowrap;-webkit-text-stroke:0.15px currentColor">Button</div></div>
  <div class="a" style="left:739.0px;top:660.0px;width:23.1px;height:10.6px;border-radius:1.8px;background:#1E1C30;border:0.9px solid #4440D8;box-shadow:0 0 0 0.8px rgba(0,0,0,.55)"><div style="position:absolute;left:50%;top:50%;transform:translate(-50%,-50%) scale(0.33);display:flex;align-items:center;font-size:10px;line-height:12px;color:#5A55F5;white-space:nowrap;-webkit-text-stroke:0.15px currentColor">Button</div></div>
  <div class="a" style="left:851.5px;top:661.2px;width:22.5px;height:8.0px;border-radius:1.5px;background:#1E1C30;border:0.9px solid #4440D8;box-shadow:0 0 0 0.8px rgba(0,0,0,.55)"><div style="position:absolute;left:50%;top:50%;transform:translate(-50%,-50%) scale(0.27);display:flex;align-items:center;font-size:10px;line-height:12px;color:#5A55F5;white-space:nowrap;-webkit-text-stroke:0.15px currentColor"><i style="display:inline-block;width:10px;height:10px;border:2px solid #5A55F5;border-radius:50%;margin:0 5px 0 0"></i>Button</div></div>
  <div class="a" style="left:881.2px;top:661.0px;width:24.1px;height:8.6px;border-radius:1.5px;background:#1E1C30;border:0.9px solid #4440D8;box-shadow:0 0 0 0.8px rgba(0,0,0,.55)"><div style="position:absolute;left:50%;top:50%;transform:translate(-50%,-50%) scale(0.27);display:flex;align-items:center;font-size:10px;line-height:12px;color:#5A55F5;white-space:nowrap;-webkit-text-stroke:0.15px currentColor"><i style="display:inline-block;width:10px;height:10px;border:2px solid #5A55F5;border-radius:50%;margin:0 5px 0 0"></i>Button</div></div>
  <div class="a" style="left:911.7px;top:660.0px;width:29.3px;height:10.6px;border-radius:1.8px;background:#1E1C30;border:0.9px solid #4440D8;box-shadow:0 0 0 0.8px rgba(0,0,0,.55)"><div style="position:absolute;left:50%;top:50%;transform:translate(-50%,-50%) scale(0.33);display:flex;align-items:center;font-size:10px;line-height:12px;color:#5A55F5;white-space:nowrap;-webkit-text-stroke:0.15px currentColor"><i style="display:inline-block;width:10px;height:10px;border:2px solid #5A55F5;border-radius:50%;margin:0 5px 0 0"></i>Button</div></div>
  <div class="a" style="left:1013.1px;top:661.2px;width:22.5px;height:8.0px;border-radius:1.5px;background:#1E1C30;border:0.9px solid #4440D8;box-shadow:0 0 0 0.8px rgba(0,0,0,.55)"><div style="position:absolute;left:50%;top:50%;transform:translate(-50%,-50%) scale(0.27);display:flex;align-items:center;font-size:10px;line-height:12px;color:#5A55F5;white-space:nowrap;-webkit-text-stroke:0.15px currentColor">Button<i style="display:inline-block;width:10px;height:10px;border:2px solid #5A55F5;border-radius:50%;margin:0 0 0 5px"></i></div></div>
  <div class="a" style="left:1042.7px;top:661.0px;width:23.5px;height:8.6px;border-radius:1.5px;background:#1E1C30;border:0.9px solid #4440D8;box-shadow:0 0 0 0.8px rgba(0,0,0,.55)"><div style="position:absolute;left:50%;top:50%;transform:translate(-50%,-50%) scale(0.27);display:flex;align-items:center;font-size:10px;line-height:12px;color:#5A55F5;white-space:nowrap;-webkit-text-stroke:0.15px currentColor">Button<i style="display:inline-block;width:10px;height:10px;border:2px solid #5A55F5;border-radius:50%;margin:0 0 0 5px"></i></div></div>
  <div class="a" style="left:1073.3px;top:660.0px;width:29.0px;height:10.6px;border-radius:1.8px;background:#1E1C30;border:0.9px solid #4440D8;box-shadow:0 0 0 0.8px rgba(0,0,0,.55)"><div style="position:absolute;left:50%;top:50%;transform:translate(-50%,-50%) scale(0.33);display:flex;align-items:center;font-size:10px;line-height:12px;color:#5A55F5;white-space:nowrap;-webkit-text-stroke:0.15px currentColor">Button<i style="display:inline-block;width:10px;height:10px;border:2px solid #5A55F5;border-radius:50%;margin:0 0 0 5px"></i></div></div>
  <div class="a" style="left:690.0px;top:678.5px;width:17.0px;height:8.0px;border-radius:1.5px;background:#1E1E26;border:0.9px solid #2E2C80;box-shadow:0 0 0 0.8px rgba(0,0,0,.55)"><div style="position:absolute;left:50%;top:50%;transform:translate(-50%,-50%) scale(0.27);display:flex;align-items:center;font-size:10px;line-height:12px;color:#3A38A0;white-space:nowrap;-webkit-text-stroke:0.15px currentColor">Button</div></div>
  <div class="a" style="left:713.7px;top:678.2px;width:18.6px;height:8.6px;border-radius:1.5px;background:#1E1E26;border:0.9px solid #2E2C80;box-shadow:0 0 0 0.8px rgba(0,0,0,.55)"><div style="position:absolute;left:50%;top:50%;transform:translate(-50%,-50%) scale(0.27);display:flex;align-items:center;font-size:10px;line-height:12px;color:#3A38A0;white-space:nowrap;-webkit-text-stroke:0.15px currentColor">Button</div></div>
  <div class="a" style="left:739.0px;top:677.2px;width:23.1px;height:10.6px;border-radius:1.8px;background:#1E1E26;border:0.9px solid #2E2C80;box-shadow:0 0 0 0.8px rgba(0,0,0,.55)"><div style="position:absolute;left:50%;top:50%;transform:translate(-50%,-50%) scale(0.33);display:flex;align-items:center;font-size:10px;line-height:12px;color:#3A38A0;white-space:nowrap;-webkit-text-stroke:0.15px currentColor">Button</div></div>
  <div class="a" style="left:851.5px;top:678.5px;width:22.5px;height:8.0px;border-radius:1.5px;background:#1E1E26;border:0.9px solid #2E2C80;box-shadow:0 0 0 0.8px rgba(0,0,0,.55)"><div style="position:absolute;left:50%;top:50%;transform:translate(-50%,-50%) scale(0.27);display:flex;align-items:center;font-size:10px;line-height:12px;color:#3A38A0;white-space:nowrap;-webkit-text-stroke:0.15px currentColor"><i style="display:inline-block;width:10px;height:10px;border:2px solid #3A38A0;border-radius:50%;margin:0 5px 0 0"></i>Button</div></div>
  <div class="a" style="left:881.2px;top:678.2px;width:24.1px;height:8.6px;border-radius:1.5px;background:#1E1E26;border:0.9px solid #2E2C80;box-shadow:0 0 0 0.8px rgba(0,0,0,.55)"><div style="position:absolute;left:50%;top:50%;transform:translate(-50%,-50%) scale(0.27);display:flex;align-items:center;font-size:10px;line-height:12px;color:#3A38A0;white-space:nowrap;-webkit-text-stroke:0.15px currentColor"><i style="display:inline-block;width:10px;height:10px;border:2px solid #3A38A0;border-radius:50%;margin:0 5px 0 0"></i>Button</div></div>
  <div class="a" style="left:911.7px;top:677.2px;width:29.3px;height:10.6px;border-radius:1.8px;background:#1E1E26;border:0.9px solid #2E2C80;box-shadow:0 0 0 0.8px rgba(0,0,0,.55)"><div style="position:absolute;left:50%;top:50%;transform:translate(-50%,-50%) scale(0.33);display:flex;align-items:center;font-size:10px;line-height:12px;color:#3A38A0;white-space:nowrap;-webkit-text-stroke:0.15px currentColor"><i style="display:inline-block;width:10px;height:10px;border:2px solid #3A38A0;border-radius:50%;margin:0 5px 0 0"></i>Button</div></div>
  <div class="a" style="left:1013.1px;top:678.5px;width:22.5px;height:8.0px;border-radius:1.5px;background:#1E1E26;border:0.9px solid #2E2C80;box-shadow:0 0 0 0.8px rgba(0,0,0,.55)"><div style="position:absolute;left:50%;top:50%;transform:translate(-50%,-50%) scale(0.27);display:flex;align-items:center;font-size:10px;line-height:12px;color:#3A38A0;white-space:nowrap;-webkit-text-stroke:0.15px currentColor">Button<i style="display:inline-block;width:10px;height:10px;border:2px solid #3A38A0;border-radius:50%;margin:0 0 0 5px"></i></div></div>
  <div class="a" style="left:1042.7px;top:678.2px;width:23.5px;height:8.6px;border-radius:1.5px;background:#1E1E26;border:0.9px solid #2E2C80;box-shadow:0 0 0 0.8px rgba(0,0,0,.55)"><div style="position:absolute;left:50%;top:50%;transform:translate(-50%,-50%) scale(0.27);display:flex;align-items:center;font-size:10px;line-height:12px;color:#3A38A0;white-space:nowrap;-webkit-text-stroke:0.15px currentColor">Button<i style="display:inline-block;width:10px;height:10px;border:2px solid #3A38A0;border-radius:50%;margin:0 0 0 5px"></i></div></div>
  <div class="a" style="left:1073.3px;top:677.2px;width:29.0px;height:10.6px;border-radius:1.8px;background:#1E1E26;border:0.9px solid #2E2C80;box-shadow:0 0 0 0.8px rgba(0,0,0,.55)"><div style="position:absolute;left:50%;top:50%;transform:translate(-50%,-50%) scale(0.33);display:flex;align-items:center;font-size:10px;line-height:12px;color:#3A38A0;white-space:nowrap;-webkit-text-stroke:0.15px currentColor">Button<i style="display:inline-block;width:10px;height:10px;border:2px solid #3A38A0;border-radius:50%;margin:0 0 0 5px"></i></div></div>
  <div class="a" style="left:690.0px;top:706.0px;width:17.0px;height:8.0px;border-radius:1.5px;background:linear-gradient(90deg,#141418 0%,#060608 100%);border:0.7px solid #1A1A1E;box-shadow:0 0 0 0.8px rgba(0,0,0,.55)"><div style="position:absolute;left:50%;top:50%;transform:translate(-50%,-50%) scale(0.27);display:flex;align-items:center;font-size:10px;line-height:12px;color:#707078;white-space:nowrap;-webkit-text-stroke:0.15px currentColor">Button</div></div>
  <div class="a" style="left:713.7px;top:705.8px;width:18.6px;height:8.6px;border-radius:1.5px;background:linear-gradient(90deg,#141418 0%,#060608 100%);border:0.7px solid #1A1A1E;box-shadow:0 0 0 0.8px rgba(0,0,0,.55)"><div style="position:absolute;left:50%;top:50%;transform:translate(-50%,-50%) scale(0.27);display:flex;align-items:center;font-size:10px;line-height:12px;color:#707078;white-space:nowrap;-webkit-text-stroke:0.15px currentColor">Button</div></div>
  <div class="a" style="left:739.0px;top:704.8px;width:23.1px;height:10.6px;border-radius:1.8px;background:linear-gradient(90deg,#141418 0%,#060608 100%);border:0.7px solid #1A1A1E;box-shadow:0 0 0 0.8px rgba(0,0,0,.55)"><div style="position:absolute;left:50%;top:50%;transform:translate(-50%,-50%) scale(0.33);display:flex;align-items:center;font-size:10px;line-height:12px;color:#707078;white-space:nowrap;-webkit-text-stroke:0.15px currentColor">Button</div></div>
  <div class="a" style="left:851.5px;top:706.0px;width:22.5px;height:8.0px;border-radius:1.5px;background:linear-gradient(90deg,#141418 0%,#060608 100%);border:0.7px solid #1A1A1E;box-shadow:0 0 0 0.8px rgba(0,0,0,.55)"><div style="position:absolute;left:50%;top:50%;transform:translate(-50%,-50%) scale(0.27);display:flex;align-items:center;font-size:10px;line-height:12px;color:#707078;white-space:nowrap;-webkit-text-stroke:0.15px currentColor"><i style="display:inline-block;width:10px;height:10px;border:2px solid #707078;border-radius:50%;margin:0 5px 0 0"></i>Button</div></div>
  <div class="a" style="left:881.2px;top:705.8px;width:24.1px;height:8.6px;border-radius:1.5px;background:linear-gradient(90deg,#141418 0%,#060608 100%);border:0.7px solid #1A1A1E;box-shadow:0 0 0 0.8px rgba(0,0,0,.55)"><div style="position:absolute;left:50%;top:50%;transform:translate(-50%,-50%) scale(0.27);display:flex;align-items:center;font-size:10px;line-height:12px;color:#707078;white-space:nowrap;-webkit-text-stroke:0.15px currentColor"><i style="display:inline-block;width:10px;height:10px;border:2px solid #707078;border-radius:50%;margin:0 5px 0 0"></i>Button</div></div>
  <div class="a" style="left:911.7px;top:704.8px;width:29.3px;height:10.6px;border-radius:1.8px;background:linear-gradient(90deg,#141418 0%,#060608 100%);border:0.7px solid #1A1A1E;box-shadow:0 0 0 0.8px rgba(0,0,0,.55)"><div style="position:absolute;left:50%;top:50%;transform:translate(-50%,-50%) scale(0.33);display:flex;align-items:center;font-size:10px;line-height:12px;color:#707078;white-space:nowrap;-webkit-text-stroke:0.15px currentColor"><i style="display:inline-block;width:10px;height:10px;border:2px solid #707078;border-radius:50%;margin:0 5px 0 0"></i>Button</div></div>
  <div class="a" style="left:1013.1px;top:706.0px;width:22.5px;height:8.0px;border-radius:1.5px;background:linear-gradient(90deg,#141418 0%,#060608 100%);border:0.7px solid #1A1A1E;box-shadow:0 0 0 0.8px rgba(0,0,0,.55)"><div style="position:absolute;left:50%;top:50%;transform:translate(-50%,-50%) scale(0.27);display:flex;align-items:center;font-size:10px;line-height:12px;color:#707078;white-space:nowrap;-webkit-text-stroke:0.15px currentColor">Button<i style="display:inline-block;width:10px;height:10px;border:2px solid #707078;border-radius:50%;margin:0 0 0 5px"></i></div></div>
  <div class="a" style="left:1042.7px;top:705.8px;width:23.5px;height:8.6px;border-radius:1.5px;background:linear-gradient(90deg,#141418 0%,#060608 100%);border:0.7px solid #1A1A1E;box-shadow:0 0 0 0.8px rgba(0,0,0,.55)"><div style="position:absolute;left:50%;top:50%;transform:translate(-50%,-50%) scale(0.27);display:flex;align-items:center;font-size:10px;line-height:12px;color:#707078;white-space:nowrap;-webkit-text-stroke:0.15px currentColor">Button<i style="display:inline-block;width:10px;height:10px;border:2px solid #707078;border-radius:50%;margin:0 0 0 5px"></i></div></div>
  <div class="a" style="left:1073.3px;top:704.8px;width:29.0px;height:10.6px;border-radius:1.8px;background:linear-gradient(90deg,#141418 0%,#060608 100%);border:0.7px solid #1A1A1E;box-shadow:0 0 0 0.8px rgba(0,0,0,.55)"><div style="position:absolute;left:50%;top:50%;transform:translate(-50%,-50%) scale(0.33);display:flex;align-items:center;font-size:10px;line-height:12px;color:#707078;white-space:nowrap;-webkit-text-stroke:0.15px currentColor">Button<i style="display:inline-block;width:10px;height:10px;border:2px solid #707078;border-radius:50%;margin:0 0 0 5px"></i></div></div>
  <div class="a" style="left:690.0px;top:723.3px;width:17.0px;height:8.0px;border-radius:1.5px;background:#050508;border:0.7px solid #2A2840;box-shadow:0 0 0 0.8px rgba(0,0,0,.55)"><div style="position:absolute;left:50%;top:50%;transform:translate(-50%,-50%) scale(0.27);display:flex;align-items:center;font-size:10px;line-height:12px;color:#9A70F0;white-space:nowrap;-webkit-text-stroke:0.15px currentColor">Button</div></div>
  <div class="a" style="left:713.7px;top:723.0px;width:18.6px;height:8.6px;border-radius:1.5px;background:#050508;border:0.7px solid #2A2840;box-shadow:0 0 0 0.8px rgba(0,0,0,.55)"><div style="position:absolute;left:50%;top:50%;transform:translate(-50%,-50%) scale(0.27);display:flex;align-items:center;font-size:10px;line-height:12px;color:#9A70F0;white-space:nowrap;-webkit-text-stroke:0.15px currentColor">Button</div></div>
  <div class="a" style="left:739.0px;top:722.0px;width:23.1px;height:10.6px;border-radius:1.8px;background:#050508;border:0.7px solid #2A2840;box-shadow:0 0 0 0.8px rgba(0,0,0,.55)"><div style="position:absolute;left:50%;top:50%;transform:translate(-50%,-50%) scale(0.33);display:flex;align-items:center;font-size:10px;line-height:12px;color:#9A70F0;white-space:nowrap;-webkit-text-stroke:0.15px currentColor">Button</div></div>
  <div class="a" style="left:851.5px;top:723.3px;width:22.5px;height:8.0px;border-radius:1.5px;background:#050508;border:0.7px solid #2A2840;box-shadow:0 0 0 0.8px rgba(0,0,0,.55)"><div style="position:absolute;left:50%;top:50%;transform:translate(-50%,-50%) scale(0.27);display:flex;align-items:center;font-size:10px;line-height:12px;color:#9A70F0;white-space:nowrap;-webkit-text-stroke:0.15px currentColor"><i style="display:inline-block;width:10px;height:10px;border:2px solid #9A70F0;border-radius:50%;margin:0 5px 0 0"></i>Button</div></div>
  <div class="a" style="left:881.2px;top:723.0px;width:24.1px;height:8.6px;border-radius:1.5px;background:#050508;border:0.7px solid #2A2840;box-shadow:0 0 0 0.8px rgba(0,0,0,.55)"><div style="position:absolute;left:50%;top:50%;transform:translate(-50%,-50%) scale(0.27);display:flex;align-items:center;font-size:10px;line-height:12px;color:#9A70F0;white-space:nowrap;-webkit-text-stroke:0.15px currentColor"><i style="display:inline-block;width:10px;height:10px;border:2px solid #9A70F0;border-radius:50%;margin:0 5px 0 0"></i>Button</div></div>
  <div class="a" style="left:911.7px;top:722.0px;width:29.3px;height:10.6px;border-radius:1.8px;background:#050508;border:0.7px solid #2A2840;box-shadow:0 0 0 0.8px rgba(0,0,0,.55)"><div style="position:absolute;left:50%;top:50%;transform:translate(-50%,-50%) scale(0.33);display:flex;align-items:center;font-size:10px;line-height:12px;color:#9A70F0;white-space:nowrap;-webkit-text-stroke:0.15px currentColor"><i style="display:inline-block;width:10px;height:10px;border:2px solid #9A70F0;border-radius:50%;margin:0 5px 0 0"></i>Button</div></div>
  <div class="a" style="left:1013.1px;top:723.3px;width:22.5px;height:8.0px;border-radius:1.5px;background:#050508;border:0.7px solid #2A2840;box-shadow:0 0 0 0.8px rgba(0,0,0,.55)"><div style="position:absolute;left:50%;top:50%;transform:translate(-50%,-50%) scale(0.27);display:flex;align-items:center;font-size:10px;line-height:12px;color:#9A70F0;white-space:nowrap;-webkit-text-stroke:0.15px currentColor">Button<i style="display:inline-block;width:10px;height:10px;border:2px solid #9A70F0;border-radius:50%;margin:0 0 0 5px"></i></div></div>
  <div class="a" style="left:1042.7px;top:723.0px;width:23.5px;height:8.6px;border-radius:1.5px;background:#050508;border:0.7px solid #2A2840;box-shadow:0 0 0 0.8px rgba(0,0,0,.55)"><div style="position:absolute;left:50%;top:50%;transform:translate(-50%,-50%) scale(0.27);display:flex;align-items:center;font-size:10px;line-height:12px;color:#9A70F0;white-space:nowrap;-webkit-text-stroke:0.15px currentColor">Button<i style="display:inline-block;width:10px;height:10px;border:2px solid #9A70F0;border-radius:50%;margin:0 0 0 5px"></i></div></div>
  <div class="a" style="left:1073.3px;top:722.0px;width:29.0px;height:10.6px;border-radius:1.8px;background:#050508;border:0.7px solid #2A2840;box-shadow:0 0 0 0.8px rgba(0,0,0,.55)"><div style="position:absolute;left:50%;top:50%;transform:translate(-50%,-50%) scale(0.33);display:flex;align-items:center;font-size:10px;line-height:12px;color:#9A70F0;white-space:nowrap;-webkit-text-stroke:0.15px currentColor">Button<i style="display:inline-block;width:10px;height:10px;border:2px solid #9A70F0;border-radius:50%;margin:0 0 0 5px"></i></div></div>
  <div class="a" style="left:690.0px;top:740.5px;width:17.0px;height:8.0px;border-radius:1.5px;background:linear-gradient(90deg,#34343F 0%,#2A2A34 60%,rgba(30,30,30,0.2) 100%);border:0.7px solid transparent;box-shadow:0 0 0 0.8px rgba(0,0,0,.55)"><div style="position:absolute;left:50%;top:50%;transform:translate(-50%,-50%) scale(0.27);display:flex;align-items:center;font-size:10px;line-height:12px;color:#505060;white-space:nowrap;-webkit-text-stroke:0.15px currentColor">Button</div></div>
  <div class="a" style="left:713.7px;top:740.2px;width:18.6px;height:8.6px;border-radius:1.5px;background:linear-gradient(90deg,#34343F 0%,#2A2A34 60%,rgba(30,30,30,0.2) 100%);border:0.7px solid transparent;box-shadow:0 0 0 0.8px rgba(0,0,0,.55)"><div style="position:absolute;left:50%;top:50%;transform:translate(-50%,-50%) scale(0.27);display:flex;align-items:center;font-size:10px;line-height:12px;color:#505060;white-space:nowrap;-webkit-text-stroke:0.15px currentColor">Button</div></div>
  <div class="a" style="left:739.0px;top:739.2px;width:23.1px;height:10.6px;border-radius:1.8px;background:linear-gradient(90deg,#34343F 0%,#2A2A34 60%,rgba(30,30,30,0.2) 100%);border:0.7px solid transparent;box-shadow:0 0 0 0.8px rgba(0,0,0,.55)"><div style="position:absolute;left:50%;top:50%;transform:translate(-50%,-50%) scale(0.33);display:flex;align-items:center;font-size:10px;line-height:12px;color:#505060;white-space:nowrap;-webkit-text-stroke:0.15px currentColor">Button</div></div>
  <div class="a" style="left:851.5px;top:740.5px;width:22.5px;height:8.0px;border-radius:1.5px;background:linear-gradient(90deg,#34343F 0%,#2A2A34 60%,rgba(30,30,30,0.2) 100%);border:0.7px solid transparent;box-shadow:0 0 0 0.8px rgba(0,0,0,.55)"><div style="position:absolute;left:50%;top:50%;transform:translate(-50%,-50%) scale(0.27);display:flex;align-items:center;font-size:10px;line-height:12px;color:#505060;white-space:nowrap;-webkit-text-stroke:0.15px currentColor"><i style="display:inline-block;width:10px;height:10px;border:2px solid #505060;border-radius:50%;margin:0 5px 0 0"></i>Button</div></div>
  <div class="a" style="left:881.2px;top:740.2px;width:24.1px;height:8.6px;border-radius:1.5px;background:linear-gradient(90deg,#34343F 0%,#2A2A34 60%,rgba(30,30,30,0.2) 100%);border:0.7px solid transparent;box-shadow:0 0 0 0.8px rgba(0,0,0,.55)"><div style="position:absolute;left:50%;top:50%;transform:translate(-50%,-50%) scale(0.27);display:flex;align-items:center;font-size:10px;line-height:12px;color:#505060;white-space:nowrap;-webkit-text-stroke:0.15px currentColor"><i style="display:inline-block;width:10px;height:10px;border:2px solid #505060;border-radius:50%;margin:0 5px 0 0"></i>Button</div></div>
  <div class="a" style="left:911.7px;top:739.2px;width:29.3px;height:10.6px;border-radius:1.8px;background:linear-gradient(90deg,#34343F 0%,#2A2A34 60%,rgba(30,30,30,0.2) 100%);border:0.7px solid transparent;box-shadow:0 0 0 0.8px rgba(0,0,0,.55)"><div style="position:absolute;left:50%;top:50%;transform:translate(-50%,-50%) scale(0.33);display:flex;align-items:center;font-size:10px;line-height:12px;color:#505060;white-space:nowrap;-webkit-text-stroke:0.15px currentColor"><i style="display:inline-block;width:10px;height:10px;border:2px solid #505060;border-radius:50%;margin:0 5px 0 0"></i>Button</div></div>
  <div class="a" style="left:1013.1px;top:740.5px;width:22.5px;height:8.0px;border-radius:1.5px;background:linear-gradient(90deg,#34343F 0%,#2A2A34 60%,rgba(30,30,30,0.2) 100%);border:0.7px solid transparent;box-shadow:0 0 0 0.8px rgba(0,0,0,.55)"><div style="position:absolute;left:50%;top:50%;transform:translate(-50%,-50%) scale(0.27);display:flex;align-items:center;font-size:10px;line-height:12px;color:#505060;white-space:nowrap;-webkit-text-stroke:0.15px currentColor">Button<i style="display:inline-block;width:10px;height:10px;border:2px solid #505060;border-radius:50%;margin:0 0 0 5px"></i></div></div>
  <div class="a" style="left:1042.7px;top:740.2px;width:23.5px;height:8.6px;border-radius:1.5px;background:linear-gradient(90deg,#34343F 0%,#2A2A34 60%,rgba(30,30,30,0.2) 100%);border:0.7px solid transparent;box-shadow:0 0 0 0.8px rgba(0,0,0,.55)"><div style="position:absolute;left:50%;top:50%;transform:translate(-50%,-50%) scale(0.27);display:flex;align-items:center;font-size:10px;line-height:12px;color:#505060;white-space:nowrap;-webkit-text-stroke:0.15px currentColor">Button<i style="display:inline-block;width:10px;height:10px;border:2px solid #505060;border-radius:50%;margin:0 0 0 5px"></i></div></div>
  <div class="a" style="left:1073.3px;top:739.2px;width:29.0px;height:10.6px;border-radius:1.8px;background:linear-gradient(90deg,#34343F 0%,#2A2A34 60%,rgba(30,30,30,0.2) 100%);border:0.7px solid transparent;box-shadow:0 0 0 0.8px rgba(0,0,0,.55)"><div style="position:absolute;left:50%;top:50%;transform:translate(-50%,-50%) scale(0.33);display:flex;align-items:center;font-size:10px;line-height:12px;color:#505060;white-space:nowrap;-webkit-text-stroke:0.15px currentColor">Button<i style="display:inline-block;width:10px;height:10px;border:2px solid #505060;border-radius:50%;margin:0 0 0 5px"></i></div></div>
  <!-- right panel -->
  <div class="a" style="left:1308px;top:167px;width:212px;height:640px;background:#2C2C2C"></div>
  <div class="a" style="left:1308px;top:167px;width:1px;height:640px;background:#3A3A3A"></div>

  <!-- RIGHT PANEL CONTENT -->
  <div class="t b" style="left:1323.3px;top:179px;color:#F2F2F2;font-size:9.9px">Design</div>
  <div class="t" style="left:1369.4px;top:179px;color:#C6C6C6;font-size:10.1px;letter-spacing:0.3px">Prototype</div>
  <div class="a" style="left:1309px;top:202px;width:211px;height:1px;background:#3A3A3A"></div>
  <div class="t b" style="left:1323.3px;top:218.5px;color:#F2F2F2;font-size:9.9px">Page</div>
  <div class="a" style="left:1323.8px;top:245.8px;width:13.4px;height:13.4px;background:#1E1E1E;border:0.5px solid #333"></div>
  <div class="t" style="left:1344.6px;top:246.5px;color:#F6F6F6;font-size:10px">1E1E1E</div>
  <div class="t" style="left:1408.5px;top:246.5px;color:#F6F6F6;font-size:10px">100%</div>
  <svg class="a" style="left:1491px;top:246px" width="16" height="12" viewBox="0 0 16 12"><g fill="none" stroke="#EDEDED" stroke-width="1.2"><path d="M1.5 6 Q8 -0.5 14.5 6 Q8 12.5 1.5 6 Z"/><circle cx="8" cy="6" r="1.9"/></g></svg>
  <div class="a" style="left:1309px;top:273px;width:211px;height:1px;background:#3A3A3A"></div>
  <div class="t" style="left:1323.3px;top:289.5px;color:#E6E6E6;font-size:9.9px">Local variables</div>
  <svg class="a" style="left:1492px;top:288px" width="14" height="15" viewBox="0 0 14 15"><g fill="none" stroke="#E6E6E6" stroke-width="1.1"><path d="M4.5 1 V8.6 M4.5 12.4 V14 M9.5 1 V2.6 M9.5 6.4 V14"/><circle cx="4.5" cy="10.5" r="1.8"/><circle cx="9.5" cy="4.5" r="1.8"/></g></svg>
  <div class="a" style="left:1309px;top:316px;width:211px;height:1px;background:#3A3A3A"></div>
  <div class="t b" style="left:1323.3px;top:332.5px;color:#F2F2F2;font-size:9.9px">Local styles</div>
  <svg class="a" style="left:1493px;top:332.5px" width="12" height="12" viewBox="0 0 12 12"><path d="M6 1 V11 M1 6 H11" stroke="#EAEAEA" stroke-width="1.2"/></svg>
  <div class="t" style="left:1323.3px;top:367.5px;color:#B8B8B8;font-size:9.9px">Text styles</div>
  <svg class="a" style="left:1328px;top:398.6px" width="6" height="8" viewBox="0 0 6 8"><path d="M1.2 1.2 L4.6 4 L1.2 6.8 Z" fill="#8C8C8C"/></svg>
  <div class="t" style="left:1345.5px;top:396.6px;color:#F6F6F6;font-size:10px">Banner L</div>
  <svg class="a" style="left:1328px;top:428.5px" width="6" height="8" viewBox="0 0 6 8"><path d="M1.2 1.2 L4.6 4 L1.2 6.8 Z" fill="#8C8C8C"/></svg>
  <div class="t" style="left:1345.5px;top:426.5px;color:#F6F6F6;font-size:10px">Banner M</div>
  <svg class="a" style="left:1328px;top:458.4px" width="6" height="8" viewBox="0 0 6 8"><path d="M1.2 1.2 L4.6 4 L1.2 6.8 Z" fill="#8C8C8C"/></svg>
  <div class="t" style="left:1345.5px;top:456.4px;color:#F6F6F6;font-size:10px">Display XXL</div>
  <svg class="a" style="left:1328px;top:488.3px" width="6" height="8" viewBox="0 0 6 8"><path d="M1.2 1.2 L4.6 4 L1.2 6.8 Z" fill="#8C8C8C"/></svg>
  <div class="t" style="left:1345.5px;top:486.3px;color:#F6F6F6;font-size:10px">Display XL</div>
  <svg class="a" style="left:1328px;top:518.2px" width="6" height="8" viewBox="0 0 6 8"><path d="M1.2 1.2 L4.6 4 L1.2 6.8 Z" fill="#8C8C8C"/></svg>
  <div class="t" style="left:1345.5px;top:516.2px;color:#F6F6F6;font-size:10px">Display Large</div>
  <svg class="a" style="left:1328px;top:548.1px" width="6" height="8" viewBox="0 0 6 8"><path d="M1.2 1.2 L4.6 4 L1.2 6.8 Z" fill="#8C8C8C"/></svg>
  <div class="t" style="left:1345.5px;top:546.1px;color:#F6F6F6;font-size:10px">Display Medium</div>
  <svg class="a" style="left:1328px;top:578.0px" width="6" height="8" viewBox="0 0 6 8"><path d="M1.2 1.2 L4.6 4 L1.2 6.8 Z" fill="#8C8C8C"/></svg>
  <div class="t" style="left:1345.5px;top:576.0px;color:#F6F6F6;font-size:10px">Display Small</div>
  <svg class="a" style="left:1328px;top:607.9px" width="6" height="8" viewBox="0 0 6 8"><path d="M1.2 1.2 L4.6 4 L1.2 6.8 Z" fill="#8C8C8C"/></svg>
  <div class="t" style="left:1345.5px;top:605.9px;color:#F6F6F6;font-size:10px">Heading XL</div>
  <svg class="a" style="left:1328px;top:637.8px" width="6" height="8" viewBox="0 0 6 8"><path d="M1.2 1.2 L4.6 4 L1.2 6.8 Z" fill="#8C8C8C"/></svg>
  <div class="t" style="left:1345.5px;top:635.8px;color:#F6F6F6;font-size:10px">Heading Large</div>
  <svg class="a" style="left:1328px;top:667.7px" width="6" height="8" viewBox="0 0 6 8"><path d="M1.2 1.2 L4.6 4 L1.2 6.8 Z" fill="#8C8C8C"/></svg>
  <div class="t" style="left:1345.5px;top:665.7px;color:#F6F6F6;font-size:10px">Heading Medium</div>
  <svg class="a" style="left:1328px;top:697.6px" width="6" height="8" viewBox="0 0 6 8"><path d="M1.2 1.2 L4.6 4 L1.2 6.8 Z" fill="#8C8C8C"/></svg>
  <div class="t" style="left:1345.5px;top:695.6px;color:#F6F6F6;font-size:10px">Heading Small</div>
  <svg class="a" style="left:1328px;top:727.5px" width="6" height="8" viewBox="0 0 6 8"><path d="M1.2 1.2 L4.6 4 L1.2 6.8 Z" fill="#8C8C8C"/></svg>
  <div class="t" style="left:1345.5px;top:725.5px;color:#F6F6F6;font-size:10px">Text XL</div>
  <svg class="a" style="left:1328px;top:757.4px" width="6" height="8" viewBox="0 0 6 8"><path d="M1.2 1.2 L4.6 4 L1.2 6.8 Z" fill="#8C8C8C"/></svg>
  <div class="t" style="left:1345.5px;top:755.4px;color:#F6F6F6;font-size:10px">Text Large</div>
  <svg class="a" style="left:1328px;top:787.3px" width="6" height="8" viewBox="0 0 6 8"><path d="M1.2 1.2 L4.6 4 L1.2 6.8 Z" fill="#8C8C8C"/></svg>
  <div class="t" style="left:1345.5px;top:785.3px;color:#F6F6F6;font-size:10px">Text M</div>

  <!-- THUMBNAIL -->
  <div class="a" style="left:1480px;top:763.5px;width:24px;height:24px;border-radius:50%;background:#1F1F1F"></div>
  <div class="a" style="left:1376px;top:771.8px;width:133.3px;height:50px;border-radius:4.5px;background:#050508"></div>
  <div class="a" style="left:1379.1px;top:775px;width:127px;height:40px;border:1px solid #7E7E7E;border-radius:1px;background:#2A2A2A;overflow:hidden">
  <div class="a" style="left:0;top:0;width:125px;height:2.6px;background:#1E1E1E"></div>
  <div class="a" style="left:15px;top:0.6px;width:1.6px;height:1.6px;background:#1590F0"></div>
  <div class="a" style="left:17.5px;top:1px;width:12px;height:0.8px;background:#666"></div>
  <div class="a" style="left:4.2px;top:2.8px;width:4.3px;height:4.6px;background:#0C8CE9"></div>
  <div class="a" style="left:10px;top:4.6px;width:26px;height:1px;background:repeating-linear-gradient(90deg,#666 0 1.6px,transparent 1.6px 4.4px)"></div>
  <div class="a" style="left:47px;top:4.6px;width:22px;height:1px;background:#6A6A6A"></div>
  <div class="a" style="left:105px;top:3.5px;width:5.4px;height:3.4px;background:#0C8CE9;border-radius:0.6px"></div>
  <div class="a" style="left:97px;top:4.2px;width:2px;height:2px;border-radius:50%;background:#D088A0"></div>
  <div class="a" style="left:111.5px;top:3.6px;width:4.5px;height:3px;border-radius:2px;background:#444"></div>
  <div class="a" style="left:22px;top:8px;width:81px;height:1px;background:repeating-linear-gradient(90deg,#5A5A5A 0 0.8px,transparent 0.8px 5.3px)"></div>
  <div class="a" style="left:1px;top:10.5px;width:20px;height:1px;background:repeating-linear-gradient(90deg,#666 0 4px,transparent 4px 7px)"></div>
  <div class="a" style="left:3px;top:14.5px;width:16px;height:0.9px;background:#6A6A6A"></div>
  <div class="a" style="left:3px;top:19px;width:11px;height:0.9px;background:#5C5C5C"></div>
  <div class="a" style="left:3px;top:22px;width:9px;height:0.9px;background:#5C5C5C"></div>
  <div class="a" style="left:3px;top:25px;width:9px;height:0.9px;background:#5C5C5C"></div>
  <div class="a" style="left:3px;top:30px;width:12px;height:0.9px;background:#5C5C5C"></div>
  <div class="a" style="left:104px;top:10.5px;width:14px;height:1px;background:#666"></div>
  <div class="a" style="left:104px;top:15px;width:5px;height:0.9px;background:#5C5C5C"></div>
  <div class="a" style="left:105px;top:17.5px;width:8px;height:2.5px;border:0.5px solid #555"></div>
  <div class="a" style="left:104px;top:23px;width:10px;height:0.9px;background:#5C5C5C"></div>
  <div class="a" style="left:104px;top:27px;width:9px;height:0.9px;background:#5C5C5C"></div>
  <div class="a" style="left:104px;top:31px;width:7px;height:0.9px;background:#5C5C5C"></div>
  <div class="a" style="left:23.5px;top:9.5px;width:81px;height:40px;background:#1E1E1E"></div>
  </div>
  <div class="a" style="left:1405.4px;top:790.8px;width:11.6px;height:6.7px;background:linear-gradient(165deg,#200A70 0%,#5A2AD8 30%,#9A70F0 55%,#E8C0F0 85%,#F8E8F0 100%);overflow:hidden"><div class="a" style="left:-2px;top:4.2px;width:9px;height:1.2px;background:rgba(0,0,0,.85);transform:rotate(8deg)"></div></div>
  <div class="a" style="left:1418.8px;top:790.8px;width:11.6px;height:6.7px;background:#07070B"></div>
  <div class="a" style="left:1418.8px;top:789.1999999999999px;width:6px;height:0.7px;background:#484848"></div>
  <div class="a" style="left:1432px;top:790.8px;width:11.6px;height:6.7px;background:linear-gradient(165deg,#200A70 0%,#5A2AD8 30%,#9A70F0 55%,#E8C0F0 85%,#F8E8F0 100%);overflow:hidden"><div class="a" style="left:-2px;top:4.2px;width:9px;height:1.2px;background:rgba(0,0,0,.85);transform:rotate(8deg)"></div></div>
  <div class="a" style="left:1445px;top:790.8px;width:11.6px;height:6.7px;background:#07070B"></div>
  <div class="a" style="left:1445px;top:789.1999999999999px;width:6px;height:0.7px;background:#484848"></div>
  <div class="a" style="left:1458px;top:790.8px;width:11.6px;height:6.7px;background:linear-gradient(165deg,#200A70 0%,#5A2AD8 30%,#9A70F0 55%,#E8C0F0 85%,#F8E8F0 100%);overflow:hidden"><div class="a" style="left:-2px;top:4.2px;width:9px;height:1.2px;background:rgba(0,0,0,.85);transform:rotate(8deg)"></div></div>
  <div class="a" style="left:1471.5px;top:790.8px;width:11.6px;height:6.7px;background:#07070B"></div>
  <div class="a" style="left:1471.5px;top:789.1999999999999px;width:6px;height:0.7px;background:#484848"></div>
  <div class="a" style="left:1405.4px;top:801.4px;width:11.6px;height:6.7px;background:linear-gradient(165deg,#200A70 0%,#5A2AD8 30%,#9A70F0 55%,#E8C0F0 85%,#F8E8F0 100%);overflow:hidden"><div class="a" style="left:-2px;top:4.2px;width:9px;height:1.2px;background:rgba(0,0,0,.85);transform:rotate(8deg)"></div></div>
  <div class="a" style="left:1418.8px;top:801.4px;width:11.6px;height:6.7px;background:#07070B"></div>
  <div class="a" style="left:1418.8px;top:799.8px;width:6px;height:0.7px;background:#484848"></div>
  <div class="a" style="left:1432px;top:801.4px;width:11.6px;height:6.7px;background:#07070B"></div>
  <div class="a" style="left:1432px;top:799.8px;width:6px;height:0.7px;background:#484848"></div>
  <div class="a" style="left:1445px;top:801.4px;width:11.6px;height:6.7px;background:#07070B"></div>
  <div class="a" style="left:1445px;top:799.8px;width:6px;height:0.7px;background:#484848"></div>
  <div class="a" style="left:1458px;top:801.4px;width:11.6px;height:6.7px;background:#07070B"></div>
  <div class="a" style="left:1458px;top:799.8px;width:6px;height:0.7px;background:#484848"></div>
  <div class="a" style="left:1471.5px;top:801.4px;width:11.6px;height:6.7px;background:linear-gradient(165deg,#200A70 0%,#5A2AD8 30%,#9A70F0 55%,#E8C0F0 85%,#F8E8F0 100%);overflow:hidden"><div class="a" style="left:-2px;top:4.2px;width:9px;height:1.2px;background:rgba(0,0,0,.85);transform:rotate(8deg)"></div></div>
</div>
<div class="winborder" style="position:absolute;left:255px;top:96px;width:1264.5px;height:709px;border-radius:9px;border:1px solid rgba(255,255,255,.13);pointer-events:none"></div>
</body></html>
